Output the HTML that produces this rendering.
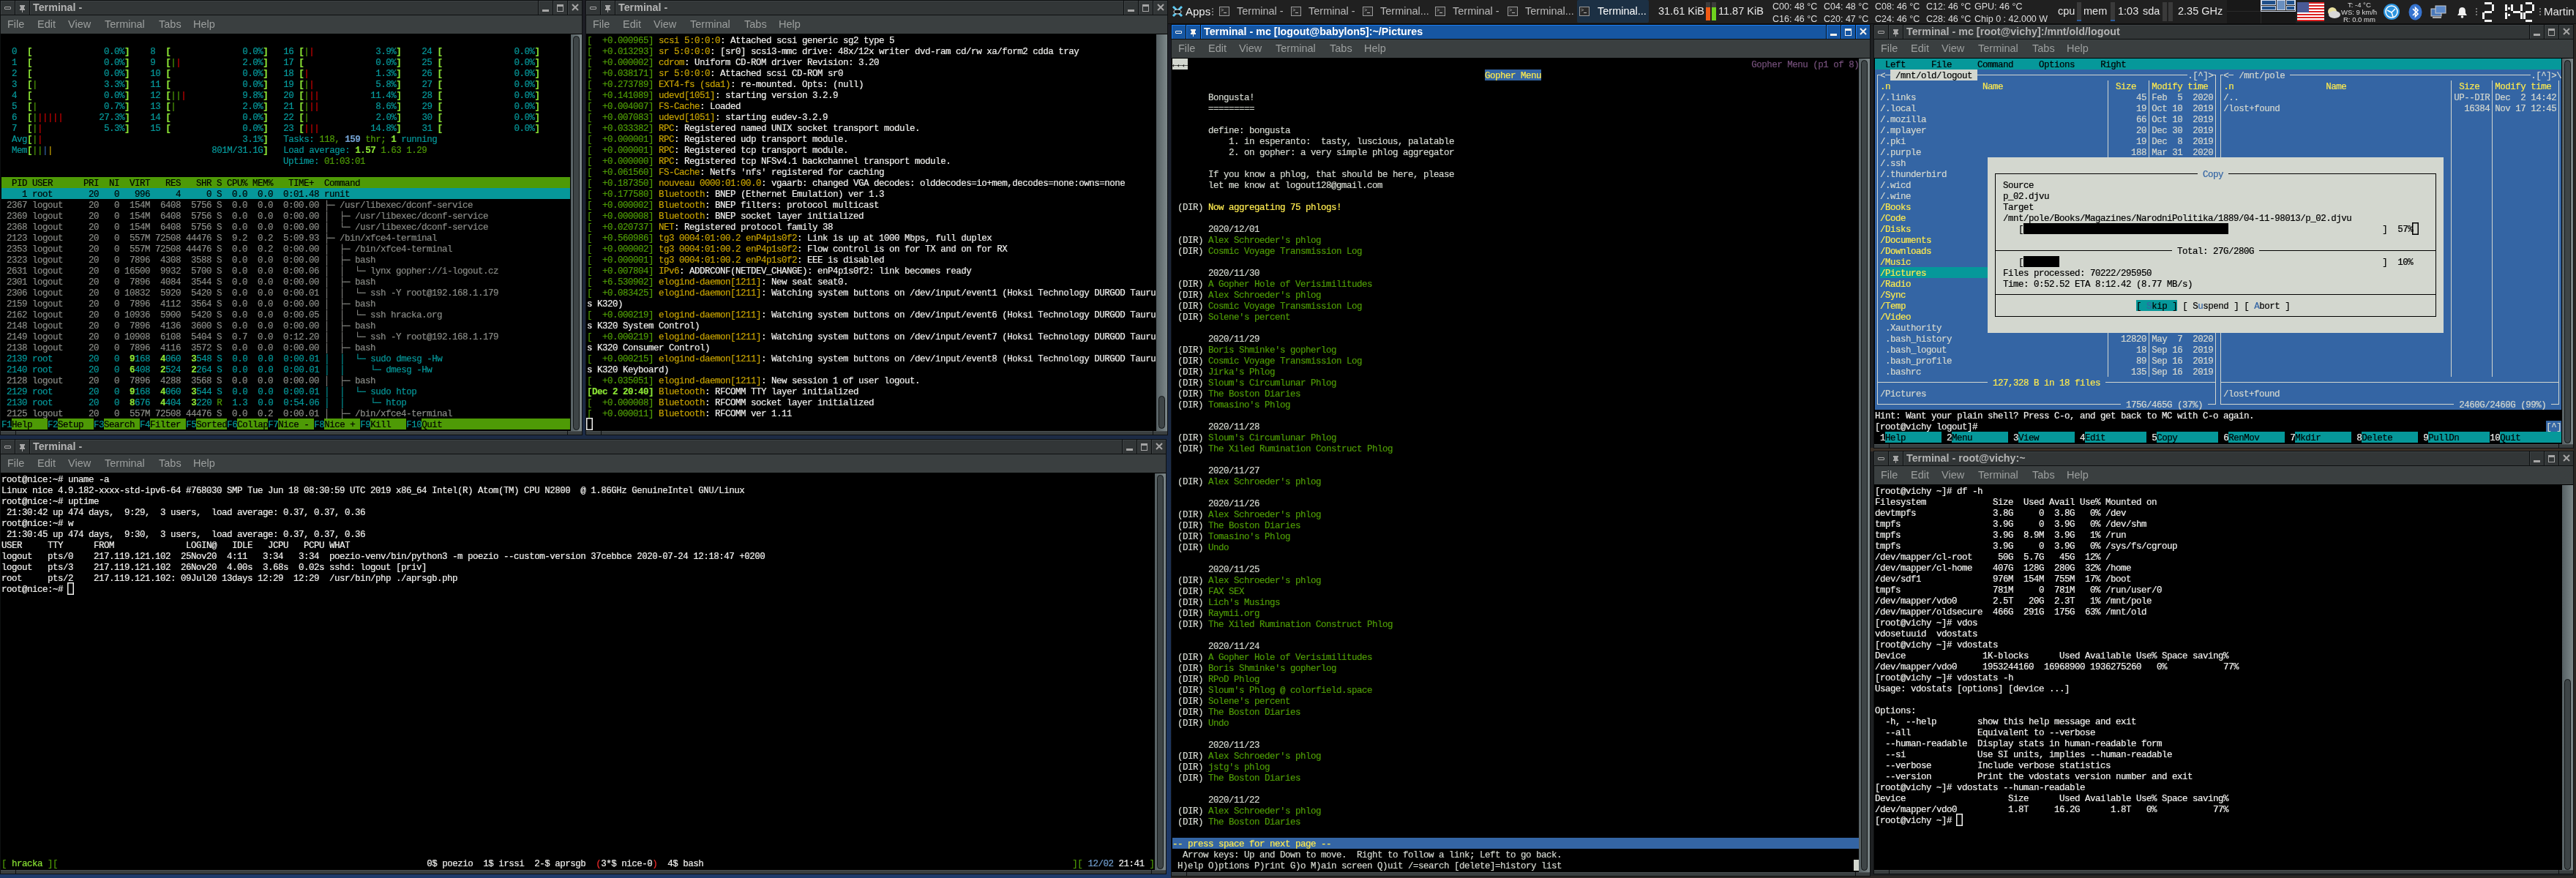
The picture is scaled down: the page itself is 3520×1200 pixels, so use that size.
<!DOCTYPE html>
<html><head><meta charset="utf-8"><style>
html,body{margin:0;padding:0;width:3520px;height:1200px;overflow:hidden;background:linear-gradient(180deg,#1c1c22 0px,#1c2b45 597px,#1e3a6a 1197px);position:relative}
.t{position:absolute;white-space:pre;-webkit-text-stroke:0.2px currentColor;font-family:"Liberation Mono",monospace;font-size:12.5px;line-height:15px;letter-spacing:-0.5px;padding-top:2px;height:15px}
.tt{position:absolute;white-space:pre;font-family:"Liberation Sans",sans-serif;font-size:14.3px;font-weight:bold;line-height:17px;padding-top:1px}
.mn{position:absolute;white-space:pre;font-family:"Liberation Sans",sans-serif;font-size:14.5px;line-height:25px;color:#9c9f9e}
.ps{position:absolute;white-space:pre;font-family:"Liberation Sans",sans-serif;color:#e6e6e6}
</style></head>
<body><div id="root" style="position:absolute;left:0;top:0;width:3520px;height:1200px;will-change:transform;overflow:hidden">
<div style="position:absolute;left:1600px;top:0px;width:1920px;height:1200px;background:#1e2022;"></div>
<div style="position:absolute;left:2556px;top:612px;width:964px;height:5px;background:#3b3128;"></div>
<div style="position:absolute;left:1600px;top:1197px;width:1920px;height:3px;background:#2c2825;"></div>
<div style="position:absolute;left:3516px;top:33px;width:4px;height:1167px;background:#2a2623;"></div>
<div style="position:absolute;left:0px;top:0px;width:796px;height:595px;background:#0e1011;"></div>
<div style="position:absolute;left:1px;top:1px;width:19px;height:19px;background:#323637;box-shadow: inset 1px 1px 0 #3d4244"></div><div style="position:absolute;left:6px;top:9px;width:7px;height:2px;border:1px solid #a6a6a6;border-radius:1px"></div>
<div style="position:absolute;left:21px;top:1px;width:19px;height:19px;background:#323637;box-shadow: inset 1px 1px 0 #3d4244"></div><div style="position:absolute;left:27px;top:7px;width:7px;height:2px;background:#a6a6a6"></div><div style="position:absolute;left:28px;top:9px;width:5px;height:3px;background:#a6a6a6"></div><div style="position:absolute;left:27px;top:12px;width:7px;height:2px;background:#a6a6a6"></div><div style="position:absolute;left:30px;top:14px;width:1px;height:3px;background:#a6a6a6"></div>
<div style="position:absolute;left:41px;top:1px;width:694px;height:19px;background:#323637;box-shadow: inset 1px 1px 0 #3d4244"></div>
<div class="tt" style="left:45px;top:1px;color:#b4b4b4">Terminal -</div>
<div style="position:absolute;left:736px;top:1px;width:19px;height:19px;background:#323637;box-shadow: inset 1px 1px 0 #3d4244"></div><div style="position:absolute;left:741px;top:13px;width:9px;height:3px;background:#a6a6a6"></div>
<div style="position:absolute;left:756px;top:1px;width:19px;height:19px;background:#323637;box-shadow: inset 1px 1px 0 #3d4244"></div><div style="position:absolute;left:761px;top:6px;width:7px;height:6px;border:1px solid #a6a6a6;border-top-width:3px"></div>
<div style="position:absolute;left:776px;top:1px;width:19px;height:19px;background:#323637;box-shadow: inset 1px 1px 0 #3d4244"></div><svg style="position:absolute;left:781px;top:5px" width="10" height="10"><path d="M1 1L9 9M9 1L1 9" stroke="#a6a6a6" stroke-width="2"/></svg>
<div style="position:absolute;left:1px;top:21px;width:794px;height:25px;background:#3a3f40;"></div>
<div class="mn" style="left:10px;top:21px">File</div>
<div class="mn" style="left:51px;top:21px">Edit</div>
<div class="mn" style="left:93px;top:21px">View</div>
<div class="mn" style="left:143px;top:21px">Terminal</div>
<div class="mn" style="left:217px;top:21px">Tabs</div>
<div class="mn" style="left:264px;top:21px">Help</div>
<div style="position:absolute;left:1px;top:46px;width:794px;height:543px;background:#000;"></div>
<div style="position:absolute;left:780px;top:47px;width:15px;height:542px;background:linear-gradient(90deg,#566063,#7d888a);"></div>
<div style="position:absolute;left:783px;top:49px;width:7px;height:537px;background:#3e4547;border:1px solid #151819;border-radius:5px"></div>
<div style="position:absolute;left:1px;top:589px;width:20px;height:5px;background:#3a3f40;box-shadow: inset 0 1px 0 #4a5052"></div>
<div style="position:absolute;left:22px;top:589px;width:753px;height:5px;background:#3a3f40;box-shadow: inset 0 1px 0 #4a5052"></div>
<div style="position:absolute;left:776px;top:589px;width:19px;height:5px;background:#3a3f40;box-shadow: inset 0 1px 0 #4a5052"></div>
<div style="position:absolute;left:800px;top:0px;width:796px;height:595px;background:#0e1011;"></div>
<div style="position:absolute;left:801px;top:1px;width:19px;height:19px;background:#323637;box-shadow: inset 1px 1px 0 #3d4244"></div><div style="position:absolute;left:806px;top:9px;width:7px;height:2px;border:1px solid #a6a6a6;border-radius:1px"></div>
<div style="position:absolute;left:821px;top:1px;width:19px;height:19px;background:#323637;box-shadow: inset 1px 1px 0 #3d4244"></div><div style="position:absolute;left:827px;top:7px;width:7px;height:2px;background:#a6a6a6"></div><div style="position:absolute;left:828px;top:9px;width:5px;height:3px;background:#a6a6a6"></div><div style="position:absolute;left:827px;top:12px;width:7px;height:2px;background:#a6a6a6"></div><div style="position:absolute;left:830px;top:14px;width:1px;height:3px;background:#a6a6a6"></div>
<div style="position:absolute;left:841px;top:1px;width:694px;height:19px;background:#323637;box-shadow: inset 1px 1px 0 #3d4244"></div>
<div class="tt" style="left:845px;top:1px;color:#b4b4b4">Terminal -</div>
<div style="position:absolute;left:1536px;top:1px;width:19px;height:19px;background:#323637;box-shadow: inset 1px 1px 0 #3d4244"></div><div style="position:absolute;left:1541px;top:13px;width:9px;height:3px;background:#a6a6a6"></div>
<div style="position:absolute;left:1556px;top:1px;width:19px;height:19px;background:#323637;box-shadow: inset 1px 1px 0 #3d4244"></div><div style="position:absolute;left:1561px;top:6px;width:7px;height:6px;border:1px solid #a6a6a6;border-top-width:3px"></div>
<div style="position:absolute;left:1576px;top:1px;width:19px;height:19px;background:#323637;box-shadow: inset 1px 1px 0 #3d4244"></div><svg style="position:absolute;left:1581px;top:5px" width="10" height="10"><path d="M1 1L9 9M9 1L1 9" stroke="#a6a6a6" stroke-width="2"/></svg>
<div style="position:absolute;left:801px;top:21px;width:794px;height:25px;background:#3a3f40;"></div>
<div class="mn" style="left:810px;top:21px">File</div>
<div class="mn" style="left:851px;top:21px">Edit</div>
<div class="mn" style="left:893px;top:21px">View</div>
<div class="mn" style="left:943px;top:21px">Terminal</div>
<div class="mn" style="left:1017px;top:21px">Tabs</div>
<div class="mn" style="left:1064px;top:21px">Help</div>
<div style="position:absolute;left:801px;top:46px;width:794px;height:543px;background:#000;"></div>
<div style="position:absolute;left:1580px;top:47px;width:15px;height:542px;background:linear-gradient(90deg,#566063,#7d888a);"></div>
<div style="position:absolute;left:1583px;top:541px;width:7px;height:43px;background:#3e4547;border:1px solid #151819;border-radius:5px"></div>
<div style="position:absolute;left:801px;top:589px;width:20px;height:5px;background:#3a3f40;box-shadow: inset 0 1px 0 #4a5052"></div>
<div style="position:absolute;left:822px;top:589px;width:753px;height:5px;background:#3a3f40;box-shadow: inset 0 1px 0 #4a5052"></div>
<div style="position:absolute;left:1576px;top:589px;width:19px;height:5px;background:#3a3f40;box-shadow: inset 0 1px 0 #4a5052"></div>
<div style="position:absolute;left:0px;top:600px;width:1594px;height:595px;background:#0e1011;"></div>
<div style="position:absolute;left:1px;top:601px;width:19px;height:19px;background:#323637;box-shadow: inset 1px 1px 0 #3d4244"></div><div style="position:absolute;left:6px;top:609px;width:7px;height:2px;border:1px solid #a6a6a6;border-radius:1px"></div>
<div style="position:absolute;left:21px;top:601px;width:19px;height:19px;background:#323637;box-shadow: inset 1px 1px 0 #3d4244"></div><div style="position:absolute;left:27px;top:607px;width:7px;height:2px;background:#a6a6a6"></div><div style="position:absolute;left:28px;top:609px;width:5px;height:3px;background:#a6a6a6"></div><div style="position:absolute;left:27px;top:612px;width:7px;height:2px;background:#a6a6a6"></div><div style="position:absolute;left:30px;top:614px;width:1px;height:3px;background:#a6a6a6"></div>
<div style="position:absolute;left:41px;top:601px;width:1492px;height:19px;background:#323637;box-shadow: inset 1px 1px 0 #3d4244"></div>
<div class="tt" style="left:45px;top:601px;color:#b4b4b4">Terminal -</div>
<div style="position:absolute;left:1534px;top:601px;width:19px;height:19px;background:#323637;box-shadow: inset 1px 1px 0 #3d4244"></div><div style="position:absolute;left:1539px;top:613px;width:9px;height:3px;background:#a6a6a6"></div>
<div style="position:absolute;left:1554px;top:601px;width:19px;height:19px;background:#323637;box-shadow: inset 1px 1px 0 #3d4244"></div><div style="position:absolute;left:1559px;top:606px;width:7px;height:6px;border:1px solid #a6a6a6;border-top-width:3px"></div>
<div style="position:absolute;left:1574px;top:601px;width:19px;height:19px;background:#323637;box-shadow: inset 1px 1px 0 #3d4244"></div><svg style="position:absolute;left:1579px;top:605px" width="10" height="10"><path d="M1 1L9 9M9 1L1 9" stroke="#a6a6a6" stroke-width="2"/></svg>
<div style="position:absolute;left:1px;top:621px;width:1592px;height:25px;background:#3a3f40;"></div>
<div class="mn" style="left:10px;top:621px">File</div>
<div class="mn" style="left:51px;top:621px">Edit</div>
<div class="mn" style="left:93px;top:621px">View</div>
<div class="mn" style="left:143px;top:621px">Terminal</div>
<div class="mn" style="left:217px;top:621px">Tabs</div>
<div class="mn" style="left:264px;top:621px">Help</div>
<div style="position:absolute;left:1px;top:646px;width:1592px;height:543px;background:#000;"></div>
<div style="position:absolute;left:1578px;top:647px;width:15px;height:542px;background:linear-gradient(90deg,#566063,#7d888a);"></div>
<div style="position:absolute;left:1581px;top:649px;width:7px;height:537px;background:#3e4547;border:1px solid #151819;border-radius:5px"></div>
<div style="position:absolute;left:1px;top:1189px;width:20px;height:5px;background:#3a3f40;box-shadow: inset 0 1px 0 #4a5052"></div>
<div style="position:absolute;left:22px;top:1189px;width:1551px;height:5px;background:#3a3f40;box-shadow: inset 0 1px 0 #4a5052"></div>
<div style="position:absolute;left:1574px;top:1189px;width:19px;height:5px;background:#3a3f40;box-shadow: inset 0 1px 0 #4a5052"></div>
<div style="position:absolute;left:1600px;top:33px;width:956px;height:1165px;background:#0e1011;"></div>
<div style="position:absolute;left:1601px;top:34px;width:19px;height:19px;background:#1656a2;box-shadow: inset 1px 1px 0 #1b7df2"></div><div style="position:absolute;left:1606px;top:42px;width:7px;height:2px;border:1px solid #f5f2ee;border-radius:1px"></div>
<div style="position:absolute;left:1621px;top:34px;width:19px;height:19px;background:#1656a2;box-shadow: inset 1px 1px 0 #1b7df2"></div><div style="position:absolute;left:1627px;top:40px;width:7px;height:2px;background:#f5f2ee"></div><div style="position:absolute;left:1628px;top:42px;width:5px;height:3px;background:#f5f2ee"></div><div style="position:absolute;left:1627px;top:45px;width:7px;height:2px;background:#f5f2ee"></div><div style="position:absolute;left:1630px;top:47px;width:1px;height:3px;background:#f5f2ee"></div>
<div style="position:absolute;left:1641px;top:34px;width:854px;height:19px;background:#1656a2;box-shadow: inset 1px 1px 0 #1b7df2"></div>
<div class="tt" style="left:1645px;top:34px;color:#ffffff">Terminal - mc [logout@babylon5]:~/Pictures</div>
<div style="position:absolute;left:2496px;top:34px;width:19px;height:19px;background:#1656a2;box-shadow: inset 1px 1px 0 #1b7df2"></div><div style="position:absolute;left:2501px;top:46px;width:9px;height:3px;background:#f5f2ee"></div>
<div style="position:absolute;left:2516px;top:34px;width:19px;height:19px;background:#1656a2;box-shadow: inset 1px 1px 0 #1b7df2"></div><div style="position:absolute;left:2521px;top:39px;width:7px;height:6px;border:1px solid #f5f2ee;border-top-width:3px"></div>
<div style="position:absolute;left:2536px;top:34px;width:19px;height:19px;background:#1656a2;box-shadow: inset 1px 1px 0 #1b7df2"></div><svg style="position:absolute;left:2541px;top:38px" width="10" height="10"><path d="M1 1L9 9M9 1L1 9" stroke="#f5f2ee" stroke-width="2"/></svg>
<div style="position:absolute;left:1601px;top:54px;width:954px;height:25px;background:#3a3f40;"></div>
<div class="mn" style="left:1610px;top:54px">File</div>
<div class="mn" style="left:1651px;top:54px">Edit</div>
<div class="mn" style="left:1693px;top:54px">View</div>
<div class="mn" style="left:1743px;top:54px">Terminal</div>
<div class="mn" style="left:1817px;top:54px">Tabs</div>
<div class="mn" style="left:1864px;top:54px">Help</div>
<div style="position:absolute;left:1601px;top:79px;width:954px;height:1113px;background:#000;"></div>
<div style="position:absolute;left:2540px;top:80px;width:15px;height:1112px;background:linear-gradient(90deg,#566063,#7d888a);"></div>
<div style="position:absolute;left:2543px;top:82px;width:7px;height:1106px;background:#3e4547;border:1px solid #151819;border-radius:5px"></div>
<div style="position:absolute;left:1601px;top:1192px;width:20px;height:5px;background:#3a3f40;box-shadow: inset 0 1px 0 #4a5052"></div>
<div style="position:absolute;left:1622px;top:1192px;width:913px;height:5px;background:#3a3f40;box-shadow: inset 0 1px 0 #4a5052"></div>
<div style="position:absolute;left:2536px;top:1192px;width:19px;height:5px;background:#3a3f40;box-shadow: inset 0 1px 0 #4a5052"></div>
<div style="position:absolute;left:2560px;top:33px;width:957px;height:580px;background:#0e1011;"></div>
<div style="position:absolute;left:2561px;top:34px;width:19px;height:19px;background:#323637;box-shadow: inset 1px 1px 0 #3d4244"></div><div style="position:absolute;left:2566px;top:42px;width:7px;height:2px;border:1px solid #a6a6a6;border-radius:1px"></div>
<div style="position:absolute;left:2581px;top:34px;width:19px;height:19px;background:#323637;box-shadow: inset 1px 1px 0 #3d4244"></div><div style="position:absolute;left:2587px;top:40px;width:7px;height:2px;background:#a6a6a6"></div><div style="position:absolute;left:2588px;top:42px;width:5px;height:3px;background:#a6a6a6"></div><div style="position:absolute;left:2587px;top:45px;width:7px;height:2px;background:#a6a6a6"></div><div style="position:absolute;left:2590px;top:47px;width:1px;height:3px;background:#a6a6a6"></div>
<div style="position:absolute;left:2601px;top:34px;width:855px;height:19px;background:#323637;box-shadow: inset 1px 1px 0 #3d4244"></div>
<div class="tt" style="left:2605px;top:34px;color:#b4b4b4">Terminal - mc [root@vichy]:/mnt/old/logout</div>
<div style="position:absolute;left:3457px;top:34px;width:19px;height:19px;background:#323637;box-shadow: inset 1px 1px 0 #3d4244"></div><div style="position:absolute;left:3462px;top:46px;width:9px;height:3px;background:#a6a6a6"></div>
<div style="position:absolute;left:3477px;top:34px;width:19px;height:19px;background:#323637;box-shadow: inset 1px 1px 0 #3d4244"></div><div style="position:absolute;left:3482px;top:39px;width:7px;height:6px;border:1px solid #a6a6a6;border-top-width:3px"></div>
<div style="position:absolute;left:3497px;top:34px;width:19px;height:19px;background:#323637;box-shadow: inset 1px 1px 0 #3d4244"></div><svg style="position:absolute;left:3502px;top:38px" width="10" height="10"><path d="M1 1L9 9M9 1L1 9" stroke="#a6a6a6" stroke-width="2"/></svg>
<div style="position:absolute;left:2561px;top:54px;width:955px;height:25px;background:#3a3f40;"></div>
<div class="mn" style="left:2570px;top:54px">File</div>
<div class="mn" style="left:2611px;top:54px">Edit</div>
<div class="mn" style="left:2653px;top:54px">View</div>
<div class="mn" style="left:2703px;top:54px">Terminal</div>
<div class="mn" style="left:2777px;top:54px">Tabs</div>
<div class="mn" style="left:2824px;top:54px">Help</div>
<div style="position:absolute;left:2561px;top:79px;width:955px;height:528px;background:#000;"></div>
<div style="position:absolute;left:3501px;top:80px;width:15px;height:527px;background:linear-gradient(90deg,#566063,#7d888a);"></div>
<div style="position:absolute;left:3504px;top:82px;width:7px;height:522px;background:#3e4547;border:1px solid #151819;border-radius:5px"></div>
<div style="position:absolute;left:2561px;top:607px;width:20px;height:5px;background:#3a3f40;box-shadow: inset 0 1px 0 #4a5052"></div>
<div style="position:absolute;left:2582px;top:607px;width:914px;height:5px;background:#3a3f40;box-shadow: inset 0 1px 0 #4a5052"></div>
<div style="position:absolute;left:3497px;top:607px;width:19px;height:5px;background:#3a3f40;box-shadow: inset 0 1px 0 #4a5052"></div>
<div style="position:absolute;left:2560px;top:616px;width:957px;height:579px;background:#0e1011;"></div>
<div style="position:absolute;left:2561px;top:617px;width:19px;height:19px;background:#323637;box-shadow: inset 1px 1px 0 #3d4244"></div><div style="position:absolute;left:2566px;top:625px;width:7px;height:2px;border:1px solid #a6a6a6;border-radius:1px"></div>
<div style="position:absolute;left:2581px;top:617px;width:19px;height:19px;background:#323637;box-shadow: inset 1px 1px 0 #3d4244"></div><div style="position:absolute;left:2587px;top:623px;width:7px;height:2px;background:#a6a6a6"></div><div style="position:absolute;left:2588px;top:625px;width:5px;height:3px;background:#a6a6a6"></div><div style="position:absolute;left:2587px;top:628px;width:7px;height:2px;background:#a6a6a6"></div><div style="position:absolute;left:2590px;top:630px;width:1px;height:3px;background:#a6a6a6"></div>
<div style="position:absolute;left:2601px;top:617px;width:855px;height:19px;background:#323637;box-shadow: inset 1px 1px 0 #3d4244"></div>
<div class="tt" style="left:2605px;top:617px;color:#b4b4b4">Terminal - root@vichy:~</div>
<div style="position:absolute;left:3457px;top:617px;width:19px;height:19px;background:#323637;box-shadow: inset 1px 1px 0 #3d4244"></div><div style="position:absolute;left:3462px;top:629px;width:9px;height:3px;background:#a6a6a6"></div>
<div style="position:absolute;left:3477px;top:617px;width:19px;height:19px;background:#323637;box-shadow: inset 1px 1px 0 #3d4244"></div><div style="position:absolute;left:3482px;top:622px;width:7px;height:6px;border:1px solid #a6a6a6;border-top-width:3px"></div>
<div style="position:absolute;left:3497px;top:617px;width:19px;height:19px;background:#323637;box-shadow: inset 1px 1px 0 #3d4244"></div><svg style="position:absolute;left:3502px;top:621px" width="10" height="10"><path d="M1 1L9 9M9 1L1 9" stroke="#a6a6a6" stroke-width="2"/></svg>
<div style="position:absolute;left:2561px;top:637px;width:955px;height:25px;background:#3a3f40;"></div>
<div class="mn" style="left:2570px;top:637px">File</div>
<div class="mn" style="left:2611px;top:637px">Edit</div>
<div class="mn" style="left:2653px;top:637px">View</div>
<div class="mn" style="left:2703px;top:637px">Terminal</div>
<div class="mn" style="left:2777px;top:637px">Tabs</div>
<div class="mn" style="left:2824px;top:637px">Help</div>
<div style="position:absolute;left:2561px;top:662px;width:955px;height:527px;background:#000;"></div>
<div style="position:absolute;left:3501px;top:663px;width:15px;height:526px;background:linear-gradient(90deg,#566063,#7d888a);"></div>
<div style="position:absolute;left:3504px;top:928px;width:7px;height:259px;background:#3e4547;border:1px solid #151819;border-radius:5px"></div>
<div style="position:absolute;left:2561px;top:1189px;width:20px;height:5px;background:#3a3f40;box-shadow: inset 0 1px 0 #4a5052"></div>
<div style="position:absolute;left:2582px;top:1189px;width:914px;height:5px;background:#3a3f40;box-shadow: inset 0 1px 0 #4a5052"></div>
<div style="position:absolute;left:3497px;top:1189px;width:19px;height:5px;background:#3a3f40;box-shadow: inset 0 1px 0 #4a5052"></div>
<div style="position:absolute;left:2px;top:242px;width:777px;height:15px;background:#4e9a06;"></div>
<div style="position:absolute;left:2px;top:257px;width:777px;height:15px;background:#06989a;"></div>
<div style="position:absolute;left:16px;top:572px;width:49px;height:15px;background:#4e9a06;"></div>
<div style="position:absolute;left:79px;top:572px;width:49px;height:15px;background:#4e9a06;"></div>
<div style="position:absolute;left:142px;top:572px;width:49px;height:15px;background:#4e9a06;"></div>
<div style="position:absolute;left:205px;top:572px;width:49px;height:15px;background:#4e9a06;"></div>
<div style="position:absolute;left:268px;top:572px;width:42px;height:15px;background:#4e9a06;"></div>
<div style="position:absolute;left:324px;top:572px;width:42px;height:15px;background:#4e9a06;"></div>
<div style="position:absolute;left:380px;top:572px;width:49px;height:15px;background:#4e9a06;"></div>
<div style="position:absolute;left:443px;top:572px;width:49px;height:15px;background:#4e9a06;"></div>
<div style="position:absolute;left:506px;top:572px;width:49px;height:15px;background:#4e9a06;"></div>
<div style="position:absolute;left:576px;top:572px;width:203px;height:15px;background:#4e9a06;"></div>
<div class="t" style="left:2px;top:62px"><span style="color:#d3d7cf">  </span><span style="color:#06989a">0  </span><span style="color:#8ae234;font-weight:bold">[</span><span style="color:#d3d7cf">              </span><span style="color:#06989a">0.0%</span><span style="color:#8ae234;font-weight:bold">]</span><span style="color:#d3d7cf">    </span><span style="color:#06989a">8  </span><span style="color:#8ae234;font-weight:bold">[</span><span style="color:#d3d7cf">              </span><span style="color:#06989a">0.0%</span><span style="color:#8ae234;font-weight:bold">]</span><span style="color:#d3d7cf">   </span><span style="color:#06989a">16 </span><span style="color:#8ae234;font-weight:bold">[</span><span style="color:#4e9a06">|</span><span style="color:#cc0000">|</span><span style="color:#d3d7cf">            </span><span style="color:#06989a">3.9%</span><span style="color:#8ae234;font-weight:bold">]</span><span style="color:#d3d7cf">    </span><span style="color:#06989a">24 </span><span style="color:#8ae234;font-weight:bold">[</span><span style="color:#d3d7cf">              </span><span style="color:#06989a">0.0%</span><span style="color:#8ae234;font-weight:bold">]</span></div>
<div class="t" style="left:2px;top:77px"><span style="color:#d3d7cf">  </span><span style="color:#06989a">1  </span><span style="color:#8ae234;font-weight:bold">[</span><span style="color:#d3d7cf">              </span><span style="color:#06989a">0.0%</span><span style="color:#8ae234;font-weight:bold">]</span><span style="color:#d3d7cf">    </span><span style="color:#06989a">9  </span><span style="color:#8ae234;font-weight:bold">[</span><span style="color:#4e9a06">|</span><span style="color:#cc0000">|</span><span style="color:#d3d7cf">            </span><span style="color:#06989a">2.0%</span><span style="color:#8ae234;font-weight:bold">]</span><span style="color:#d3d7cf">   </span><span style="color:#06989a">17 </span><span style="color:#8ae234;font-weight:bold">[</span><span style="color:#d3d7cf">              </span><span style="color:#06989a">0.0%</span><span style="color:#8ae234;font-weight:bold">]</span><span style="color:#d3d7cf">    </span><span style="color:#06989a">25 </span><span style="color:#8ae234;font-weight:bold">[</span><span style="color:#d3d7cf">              </span><span style="color:#06989a">0.0%</span><span style="color:#8ae234;font-weight:bold">]</span></div>
<div class="t" style="left:2px;top:92px"><span style="color:#d3d7cf">  </span><span style="color:#06989a">2  </span><span style="color:#8ae234;font-weight:bold">[</span><span style="color:#d3d7cf">              </span><span style="color:#06989a">0.0%</span><span style="color:#8ae234;font-weight:bold">]</span><span style="color:#d3d7cf">    </span><span style="color:#06989a">10 </span><span style="color:#8ae234;font-weight:bold">[</span><span style="color:#d3d7cf">              </span><span style="color:#06989a">0.0%</span><span style="color:#8ae234;font-weight:bold">]</span><span style="color:#d3d7cf">   </span><span style="color:#06989a">18 </span><span style="color:#8ae234;font-weight:bold">[</span><span style="color:#cc0000">|</span><span style="color:#d3d7cf">             </span><span style="color:#06989a">1.3%</span><span style="color:#8ae234;font-weight:bold">]</span><span style="color:#d3d7cf">    </span><span style="color:#06989a">26 </span><span style="color:#8ae234;font-weight:bold">[</span><span style="color:#d3d7cf">              </span><span style="color:#06989a">0.0%</span><span style="color:#8ae234;font-weight:bold">]</span></div>
<div class="t" style="left:2px;top:107px"><span style="color:#d3d7cf">  </span><span style="color:#06989a">3  </span><span style="color:#8ae234;font-weight:bold">[</span><span style="color:#4e9a06">|</span><span style="color:#d3d7cf">             </span><span style="color:#06989a">3.3%</span><span style="color:#8ae234;font-weight:bold">]</span><span style="color:#d3d7cf">    </span><span style="color:#06989a">11 </span><span style="color:#8ae234;font-weight:bold">[</span><span style="color:#d3d7cf">              </span><span style="color:#06989a">0.0%</span><span style="color:#8ae234;font-weight:bold">]</span><span style="color:#d3d7cf">   </span><span style="color:#06989a">19 </span><span style="color:#8ae234;font-weight:bold">[</span><span style="color:#4e9a06">|</span><span style="color:#cc0000">|</span><span style="color:#d3d7cf">            </span><span style="color:#06989a">5.8%</span><span style="color:#8ae234;font-weight:bold">]</span><span style="color:#d3d7cf">    </span><span style="color:#06989a">27 </span><span style="color:#8ae234;font-weight:bold">[</span><span style="color:#d3d7cf">              </span><span style="color:#06989a">0.0%</span><span style="color:#8ae234;font-weight:bold">]</span></div>
<div class="t" style="left:2px;top:122px"><span style="color:#d3d7cf">  </span><span style="color:#06989a">4  </span><span style="color:#8ae234;font-weight:bold">[</span><span style="color:#d3d7cf">              </span><span style="color:#06989a">0.0%</span><span style="color:#8ae234;font-weight:bold">]</span><span style="color:#d3d7cf">    </span><span style="color:#06989a">12 </span><span style="color:#8ae234;font-weight:bold">[</span><span style="color:#4e9a06">|</span><span style="color:#4e9a06">|</span><span style="color:#cc0000">|</span><span style="color:#d3d7cf">           </span><span style="color:#06989a">9.8%</span><span style="color:#8ae234;font-weight:bold">]</span><span style="color:#d3d7cf">   </span><span style="color:#06989a">20 </span><span style="color:#8ae234;font-weight:bold">[</span><span style="color:#4e9a06">|</span><span style="color:#cc0000">|</span><span style="color:#cc0000">|</span><span style="color:#d3d7cf">          </span><span style="color:#06989a">11.4%</span><span style="color:#8ae234;font-weight:bold">]</span><span style="color:#d3d7cf">    </span><span style="color:#06989a">28 </span><span style="color:#8ae234;font-weight:bold">[</span><span style="color:#d3d7cf">              </span><span style="color:#06989a">0.0%</span><span style="color:#8ae234;font-weight:bold">]</span></div>
<div class="t" style="left:2px;top:137px"><span style="color:#d3d7cf">  </span><span style="color:#06989a">5  </span><span style="color:#8ae234;font-weight:bold">[</span><span style="color:#4e9a06">|</span><span style="color:#d3d7cf">             </span><span style="color:#06989a">0.7%</span><span style="color:#8ae234;font-weight:bold">]</span><span style="color:#d3d7cf">    </span><span style="color:#06989a">13 </span><span style="color:#8ae234;font-weight:bold">[</span><span style="color:#4e9a06">|</span><span style="color:#d3d7cf">             </span><span style="color:#06989a">2.0%</span><span style="color:#8ae234;font-weight:bold">]</span><span style="color:#d3d7cf">   </span><span style="color:#06989a">21 </span><span style="color:#8ae234;font-weight:bold">[</span><span style="color:#4e9a06">|</span><span style="color:#cc0000">|</span><span style="color:#cc0000">|</span><span style="color:#d3d7cf">           </span><span style="color:#06989a">8.6%</span><span style="color:#8ae234;font-weight:bold">]</span><span style="color:#d3d7cf">    </span><span style="color:#06989a">29 </span><span style="color:#8ae234;font-weight:bold">[</span><span style="color:#d3d7cf">              </span><span style="color:#06989a">0.0%</span><span style="color:#8ae234;font-weight:bold">]</span></div>
<div class="t" style="left:2px;top:152px"><span style="color:#d3d7cf">  </span><span style="color:#06989a">6  </span><span style="color:#8ae234;font-weight:bold">[</span><span style="color:#4e9a06">|</span><span style="color:#cc0000">|</span><span style="color:#cc0000">|</span><span style="color:#cc0000">|</span><span style="color:#cc0000">|</span><span style="color:#cc0000">|</span><span style="color:#d3d7cf">       </span><span style="color:#06989a">27.3%</span><span style="color:#8ae234;font-weight:bold">]</span><span style="color:#d3d7cf">    </span><span style="color:#06989a">14 </span><span style="color:#8ae234;font-weight:bold">[</span><span style="color:#d3d7cf">              </span><span style="color:#06989a">0.0%</span><span style="color:#8ae234;font-weight:bold">]</span><span style="color:#d3d7cf">   </span><span style="color:#06989a">22 </span><span style="color:#8ae234;font-weight:bold">[</span><span style="color:#4e9a06">|</span><span style="color:#d3d7cf">             </span><span style="color:#06989a">2.0%</span><span style="color:#8ae234;font-weight:bold">]</span><span style="color:#d3d7cf">    </span><span style="color:#06989a">30 </span><span style="color:#8ae234;font-weight:bold">[</span><span style="color:#d3d7cf">              </span><span style="color:#06989a">0.0%</span><span style="color:#8ae234;font-weight:bold">]</span></div>
<div class="t" style="left:2px;top:167px"><span style="color:#d3d7cf">  </span><span style="color:#06989a">7  </span><span style="color:#8ae234;font-weight:bold">[</span><span style="color:#4e9a06">|</span><span style="color:#cc0000">|</span><span style="color:#d3d7cf">            </span><span style="color:#06989a">5.3%</span><span style="color:#8ae234;font-weight:bold">]</span><span style="color:#d3d7cf">    </span><span style="color:#06989a">15 </span><span style="color:#8ae234;font-weight:bold">[</span><span style="color:#d3d7cf">              </span><span style="color:#06989a">0.0%</span><span style="color:#8ae234;font-weight:bold">]</span><span style="color:#d3d7cf">   </span><span style="color:#06989a">23 </span><span style="color:#8ae234;font-weight:bold">[</span><span style="color:#cc0000">|</span><span style="color:#cc0000">|</span><span style="color:#cc0000">|</span><span style="color:#d3d7cf">          </span><span style="color:#06989a">14.8%</span><span style="color:#8ae234;font-weight:bold">]</span><span style="color:#d3d7cf">    </span><span style="color:#06989a">31 </span><span style="color:#8ae234;font-weight:bold">[</span><span style="color:#d3d7cf">              </span><span style="color:#06989a">0.0%</span><span style="color:#8ae234;font-weight:bold">]</span></div>
<div class="t" style="left:2px;top:182px"><span style="color:#d3d7cf">  </span><span style="color:#06989a">Avg</span><span style="color:#8ae234;font-weight:bold">[</span><span style="color:#4e9a06">|</span><span style="color:#cc0000">|</span><span style="color:#d3d7cf">                                       </span><span style="color:#06989a">3.1%</span><span style="color:#8ae234;font-weight:bold">]</span><span style="color:#d3d7cf">   </span><span style="color:#06989a">Tasks: </span><span style="color:#4e9a06">118</span><span style="color:#4e9a06">, </span><span style="color:#729fcf;font-weight:bold">159</span><span style="color:#4e9a06"> thr</span><span style="color:#4e9a06">; </span><span style="color:#8ae234;font-weight:bold">1</span><span style="color:#06989a"> running</span></div>
<div class="t" style="left:2px;top:197px"><span style="color:#d3d7cf">  </span><span style="color:#06989a">Mem</span><span style="color:#8ae234;font-weight:bold">[</span><span style="color:#4e9a06">|</span><span style="color:#4e9a06">|</span><span style="color:#3465a4">|</span><span style="color:#c4a000">|</span><span style="color:#d3d7cf">                               </span><span style="color:#06989a">801M/31.1G</span><span style="color:#8ae234;font-weight:bold">]</span><span style="color:#d3d7cf">   </span><span style="color:#06989a">Load average: </span><span style="color:#8ae234;font-weight:bold">1.57 </span><span style="color:#4e9a06">1.63 </span><span style="color:#4e9a06">1.29</span></div>
<div class="t" style="left:2px;top:212px"><span style="color:#d3d7cf">                                                       </span><span style="color:#06989a">Uptime: </span><span style="color:#4e9a06">01:03:01</span></div>
<div class="t" style="left:2px;top:242px"><span style="color:#000000">  PID USER      PRI  NI  VIRT   RES   SHR S CPU% MEM%   TIME+  Command</span></div>
<div class="t" style="left:2px;top:257px"><span style="color:#000000">    1 root       20   0   996     4     0 S  0.0  0.0  0:01.48 runit</span></div>
<div class="t" style="left:2px;top:272px"><span style="color:#888a85"> 2367 logout     20   0  154M  6408  5756 S  0.0  0.0  0:00.00 ├─ /usr/libexec/dconf-service</span></div>
<div class="t" style="left:2px;top:287px"><span style="color:#888a85"> 2369 logout     20   0  154M  6408  5756 S  0.0  0.0  0:00.00 │  ├─ /usr/libexec/dconf-service</span></div>
<div class="t" style="left:2px;top:302px"><span style="color:#888a85"> 2368 logout     20   0  154M  6408  5756 S  0.0  0.0  0:00.00 │  └─ /usr/libexec/dconf-service</span></div>
<div class="t" style="left:2px;top:317px"><span style="color:#888a85"> 2123 logout     20   0  557M 72508 44476 S  9.2  0.2  5:09.93 ├─ /bin/xfce4-terminal</span></div>
<div class="t" style="left:2px;top:332px"><span style="color:#888a85"> 2353 logout     20   0  557M 72508 44476 S  0.0  0.2  0:00.00 │  ├─ /bin/xfce4-terminal</span></div>
<div class="t" style="left:2px;top:347px"><span style="color:#888a85"> 2323 logout     20   0  7896  4308  3588 S  0.0  0.0  0:00.00 │  ├─ bash</span></div>
<div class="t" style="left:2px;top:362px"><span style="color:#888a85"> 2631 logout     20   0 16500  9932  5700 S  0.0  0.0  0:00.06 │  │  └─ lynx gopher://i-logout.cz</span></div>
<div class="t" style="left:2px;top:377px"><span style="color:#888a85"> 2301 logout     20   0  7896  4084  3544 S  0.0  0.0  0:00.00 │  ├─ bash</span></div>
<div class="t" style="left:2px;top:392px"><span style="color:#888a85"> 2306 logout     20   0 10832  5920  5420 S  0.0  0.0  0:00.01 │  │  └─ ssh -Y root@192.168.1.179</span></div>
<div class="t" style="left:2px;top:407px"><span style="color:#888a85"> 2159 logout     20   0  7896  4112  3564 S  0.0  0.0  0:00.00 │  ├─ bash</span></div>
<div class="t" style="left:2px;top:422px"><span style="color:#888a85"> 2162 logout     20   0 10936  5900  5420 S  0.0  0.0  0:00.05 │  │  └─ ssh hracka.org</span></div>
<div class="t" style="left:2px;top:437px"><span style="color:#888a85"> 2148 logout     20   0  7896  4136  3600 S  0.0  0.0  0:00.00 │  ├─ bash</span></div>
<div class="t" style="left:2px;top:452px"><span style="color:#888a85"> 2149 logout     20   0 10908  6108  5404 S  0.7  0.0  0:12.20 │  │  └─ ssh -Y root@192.168.1.179</span></div>
<div class="t" style="left:2px;top:467px"><span style="color:#888a85"> 2138 logout     20   0  7896  4116  3572 S  0.0  0.0  0:00.00 │  ├─ bash</span></div>
<div class="t" style="left:2px;top:482px"><span style="color:#06989a"> 2139 root       20   0 </span><span style="color:#8ae234;font-weight:bold"> 9</span><span style="color:#06989a">168</span><span style="color:#06989a"> </span><span style="color:#8ae234;font-weight:bold"> 4</span><span style="color:#06989a">060</span><span style="color:#06989a"> </span><span style="color:#8ae234;font-weight:bold"> 3</span><span style="color:#06989a">548</span><span style="color:#06989a"> </span><span style="color:#06989a">S</span><span style="color:#06989a">  0.0  0.0  0:00.01 │  │  └─ sudo dmesg -Hw</span></div>
<div class="t" style="left:2px;top:497px"><span style="color:#06989a"> 2140 root       20   0 </span><span style="color:#8ae234;font-weight:bold"> 6</span><span style="color:#06989a">408</span><span style="color:#06989a"> </span><span style="color:#8ae234;font-weight:bold"> 2</span><span style="color:#06989a">524</span><span style="color:#06989a"> </span><span style="color:#8ae234;font-weight:bold"> 2</span><span style="color:#06989a">264</span><span style="color:#06989a"> </span><span style="color:#06989a">S</span><span style="color:#06989a">  0.0  0.0  0:00.01 │  │     └─ dmesg -Hw</span></div>
<div class="t" style="left:2px;top:512px"><span style="color:#888a85"> 2128 logout     20   0  7896  4288  3568 S  0.0  0.0  0:00.00 │  ├─ bash</span></div>
<div class="t" style="left:2px;top:527px"><span style="color:#06989a"> 2129 root       20   0 </span><span style="color:#8ae234;font-weight:bold"> 9</span><span style="color:#06989a">168</span><span style="color:#06989a"> </span><span style="color:#8ae234;font-weight:bold"> 4</span><span style="color:#06989a">060</span><span style="color:#06989a"> </span><span style="color:#8ae234;font-weight:bold"> 3</span><span style="color:#06989a">544</span><span style="color:#06989a"> </span><span style="color:#06989a">S</span><span style="color:#06989a">  0.0  0.0  0:00.01 │  │  └─ sudo htop</span></div>
<div class="t" style="left:2px;top:542px"><span style="color:#06989a"> 2130 root       20   0 </span><span style="color:#8ae234;font-weight:bold"> 8</span><span style="color:#06989a">676</span><span style="color:#06989a"> </span><span style="color:#8ae234;font-weight:bold"> 4</span><span style="color:#06989a">404</span><span style="color:#06989a"> </span><span style="color:#8ae234;font-weight:bold"> 3</span><span style="color:#06989a">220</span><span style="color:#06989a"> </span><span style="color:#4e9a06">R</span><span style="color:#06989a">  1.3  0.0  0:54.06 │  │     └─ htop</span></div>
<div class="t" style="left:2px;top:557px"><span style="color:#888a85"> 2125 logout     20   0  557M 72508 44476 S  0.0  0.2  0:00.01 │  ├─ /bin/xfce4-terminal</span></div>
<div class="t" style="left:2px;top:572px"><span style="color:#06989a">F1</span><span style="color:#000000">Help   </span><span style="color:#06989a">F2</span><span style="color:#000000">Setup  </span><span style="color:#06989a">F3</span><span style="color:#000000">Search </span><span style="color:#06989a">F4</span><span style="color:#000000">Filter </span><span style="color:#06989a">F5</span><span style="color:#000000">Sorted</span><span style="color:#06989a">F6</span><span style="color:#000000">Collap</span><span style="color:#06989a">F7</span><span style="color:#000000">Nice - </span><span style="color:#06989a">F8</span><span style="color:#000000">Nice + </span><span style="color:#06989a">F9</span><span style="color:#000000">Kill   </span><span style="color:#06989a">F10</span><span style="color:#000000">Quit</span></div>
<div class="t" style="left:802px;top:47px"><span style="color:#4e9a06">[  +0.000965]</span><span style="color:#eeeeec"> </span><span style="color:#c4a000">scsi 5:0:0:0</span><span style="color:#eeeeec">: Attached scsi generic sg2 type 5</span></div>
<div class="t" style="left:802px;top:62px"><span style="color:#4e9a06">[  +0.013293]</span><span style="color:#eeeeec"> </span><span style="color:#c4a000">sr 5:0:0:0</span><span style="color:#eeeeec">: [sr0] scsi3-mmc drive: 48x/12x writer dvd-ram cd/rw xa/form2 cdda tray</span></div>
<div class="t" style="left:802px;top:77px"><span style="color:#4e9a06">[  +0.000002]</span><span style="color:#eeeeec"> </span><span style="color:#c4a000">cdrom</span><span style="color:#eeeeec">: Uniform CD-ROM driver Revision: 3.20</span></div>
<div class="t" style="left:802px;top:92px"><span style="color:#4e9a06">[  +0.038171]</span><span style="color:#eeeeec"> </span><span style="color:#c4a000">sr 5:0:0:0</span><span style="color:#eeeeec">: Attached scsi CD-ROM sr0</span></div>
<div class="t" style="left:802px;top:107px"><span style="color:#4e9a06">[  +0.273789]</span><span style="color:#eeeeec"> </span><span style="color:#c4a000">EXT4-fs (sda1)</span><span style="color:#eeeeec">: re-mounted. Opts: (null)</span></div>
<div class="t" style="left:802px;top:122px"><span style="color:#4e9a06">[  +0.141089]</span><span style="color:#eeeeec"> </span><span style="color:#c4a000">udevd[1051]</span><span style="color:#eeeeec">: starting version 3.2.9</span></div>
<div class="t" style="left:802px;top:137px"><span style="color:#4e9a06">[  +0.004007]</span><span style="color:#eeeeec"> </span><span style="color:#c4a000">FS-Cache</span><span style="color:#eeeeec">: Loaded</span></div>
<div class="t" style="left:802px;top:152px"><span style="color:#4e9a06">[  +0.007083]</span><span style="color:#eeeeec"> </span><span style="color:#c4a000">udevd[1051]</span><span style="color:#eeeeec">: starting eudev-3.2.9</span></div>
<div class="t" style="left:802px;top:167px"><span style="color:#4e9a06">[  +0.033382]</span><span style="color:#eeeeec"> </span><span style="color:#c4a000">RPC</span><span style="color:#eeeeec">: Registered named UNIX socket transport module.</span></div>
<div class="t" style="left:802px;top:182px"><span style="color:#4e9a06">[  +0.000001]</span><span style="color:#eeeeec"> </span><span style="color:#c4a000">RPC</span><span style="color:#eeeeec">: Registered udp transport module.</span></div>
<div class="t" style="left:802px;top:197px"><span style="color:#4e9a06">[  +0.000001]</span><span style="color:#eeeeec"> </span><span style="color:#c4a000">RPC</span><span style="color:#eeeeec">: Registered tcp transport module.</span></div>
<div class="t" style="left:802px;top:212px"><span style="color:#4e9a06">[  +0.000000]</span><span style="color:#eeeeec"> </span><span style="color:#c4a000">RPC</span><span style="color:#eeeeec">: Registered tcp NFSv4.1 backchannel transport module.</span></div>
<div class="t" style="left:802px;top:227px"><span style="color:#4e9a06">[  +0.061560]</span><span style="color:#eeeeec"> </span><span style="color:#c4a000">FS-Cache</span><span style="color:#eeeeec">: Netfs 'nfs' registered for caching</span></div>
<div class="t" style="left:802px;top:242px"><span style="color:#4e9a06">[  +0.187350]</span><span style="color:#eeeeec"> </span><span style="color:#c4a000">nouveau 0000:01:00.0</span><span style="color:#eeeeec">: vgaarb: changed VGA decodes: olddecodes=io+mem,decodes=none:owns=none</span></div>
<div class="t" style="left:802px;top:257px"><span style="color:#4e9a06">[  +0.177580]</span><span style="color:#eeeeec"> </span><span style="color:#c4a000">Bluetooth</span><span style="color:#eeeeec">: BNEP (Ethernet Emulation) ver 1.3</span></div>
<div class="t" style="left:802px;top:272px"><span style="color:#4e9a06">[  +0.000002]</span><span style="color:#eeeeec"> </span><span style="color:#c4a000">Bluetooth</span><span style="color:#eeeeec">: BNEP filters: protocol multicast</span></div>
<div class="t" style="left:802px;top:287px"><span style="color:#4e9a06">[  +0.000008]</span><span style="color:#eeeeec"> </span><span style="color:#c4a000">Bluetooth</span><span style="color:#eeeeec">: BNEP socket layer initialized</span></div>
<div class="t" style="left:802px;top:302px"><span style="color:#4e9a06">[  +0.020737]</span><span style="color:#eeeeec"> </span><span style="color:#c4a000">NET</span><span style="color:#eeeeec">: Registered protocol family 38</span></div>
<div class="t" style="left:802px;top:317px"><span style="color:#4e9a06">[  +0.560986]</span><span style="color:#eeeeec"> </span><span style="color:#c4a000">tg3 0004:01:00.2 enP4p1s0f2</span><span style="color:#eeeeec">: Link is up at 1000 Mbps, full duplex</span></div>
<div class="t" style="left:802px;top:332px"><span style="color:#4e9a06">[  +0.000002]</span><span style="color:#eeeeec"> </span><span style="color:#c4a000">tg3 0004:01:00.2 enP4p1s0f2</span><span style="color:#eeeeec">: Flow control is on for TX and on for RX</span></div>
<div class="t" style="left:802px;top:347px"><span style="color:#4e9a06">[  +0.000001]</span><span style="color:#eeeeec"> </span><span style="color:#c4a000">tg3 0004:01:00.2 enP4p1s0f2</span><span style="color:#eeeeec">: EEE is disabled</span></div>
<div class="t" style="left:802px;top:362px"><span style="color:#4e9a06">[  +0.007804]</span><span style="color:#eeeeec"> </span><span style="color:#c4a000">IPv6</span><span style="color:#eeeeec">: ADDRCONF(NETDEV_CHANGE): enP4p1s0f2: link becomes ready</span></div>
<div class="t" style="left:802px;top:377px"><span style="color:#4e9a06">[  +6.530902]</span><span style="color:#eeeeec"> </span><span style="color:#c4a000">elogind-daemon[1211]</span><span style="color:#eeeeec">: New seat seat0.</span></div>
<div class="t" style="left:802px;top:392px"><span style="color:#4e9a06">[  +0.083425]</span><span style="color:#eeeeec"> </span><span style="color:#c4a000">elogind-daemon[1211]</span><span style="color:#eeeeec">: Watching system buttons on /dev/input/event1 (Hoksi Technology DURGOD Tauru</span></div>
<div class="t" style="left:802px;top:407px"><span style="color:#eeeeec">s K320)</span></div>
<div class="t" style="left:802px;top:422px"><span style="color:#4e9a06">[  +0.000219]</span><span style="color:#eeeeec"> </span><span style="color:#c4a000">elogind-daemon[1211]</span><span style="color:#eeeeec">: Watching system buttons on /dev/input/event6 (Hoksi Technology DURGOD Tauru</span></div>
<div class="t" style="left:802px;top:437px"><span style="color:#eeeeec">s K320 System Control)</span></div>
<div class="t" style="left:802px;top:452px"><span style="color:#4e9a06">[  +0.000219]</span><span style="color:#eeeeec"> </span><span style="color:#c4a000">elogind-daemon[1211]</span><span style="color:#eeeeec">: Watching system buttons on /dev/input/event7 (Hoksi Technology DURGOD Tauru</span></div>
<div class="t" style="left:802px;top:467px"><span style="color:#eeeeec">s K320 Consumer Control)</span></div>
<div class="t" style="left:802px;top:482px"><span style="color:#4e9a06">[  +0.000215]</span><span style="color:#eeeeec"> </span><span style="color:#c4a000">elogind-daemon[1211]</span><span style="color:#eeeeec">: Watching system buttons on /dev/input/event8 (Hoksi Technology DURGOD Tauru</span></div>
<div class="t" style="left:802px;top:497px"><span style="color:#eeeeec">s K320 Keyboard)</span></div>
<div class="t" style="left:802px;top:512px"><span style="color:#4e9a06">[  +0.035051]</span><span style="color:#eeeeec"> </span><span style="color:#c4a000">elogind-daemon[1211]</span><span style="color:#eeeeec">: New session 1 of user logout.</span></div>
<div class="t" style="left:802px;top:527px"><span style="color:#8ae234;font-weight:bold">[Dec 2 20:40]</span><span style="color:#eeeeec"> </span><span style="color:#c4a000">Bluetooth</span><span style="color:#eeeeec">: RFCOMM TTY layer initialized</span></div>
<div class="t" style="left:802px;top:542px"><span style="color:#4e9a06">[  +0.000008]</span><span style="color:#eeeeec"> </span><span style="color:#c4a000">Bluetooth</span><span style="color:#eeeeec">: RFCOMM socket layer initialized</span></div>
<div class="t" style="left:802px;top:557px"><span style="color:#4e9a06">[  +0.000011]</span><span style="color:#eeeeec"> </span><span style="color:#c4a000">Bluetooth</span><span style="color:#eeeeec">: RFCOMM ver 1.11</span></div><div style="position:absolute;left:801px;top:571px;width:9px;height:17px;background:transparent;box-sizing:border-box;border:1px solid #eeeeec;box-shadow:inset 0 0 0 0.5px #eeeeec"></div>
<div class="t" style="left:2px;top:647px"><span style="color:#eeeeec">root@nice:~# uname -a</span></div>
<div class="t" style="left:2px;top:662px"><span style="color:#eeeeec">Linux nice 4.9.182-xxxx-std-ipv6-64 #768030 SMP Tue Jun 18 08:30:59 UTC 2019 x86_64 Intel(R) Atom(TM) CPU N2800  @ 1.86GHz GenuineIntel GNU/Linux</span></div>
<div class="t" style="left:2px;top:677px"><span style="color:#eeeeec">root@nice:~# uptime</span></div>
<div class="t" style="left:2px;top:692px"><span style="color:#eeeeec"> 21:30:42 up 474 days,  9:29,  3 users,  load average: 0.37, 0.37, 0.36</span></div>
<div class="t" style="left:2px;top:707px"><span style="color:#eeeeec">root@nice:~# w</span></div>
<div class="t" style="left:2px;top:722px"><span style="color:#eeeeec"> 21:30:45 up 474 days,  9:30,  3 users,  load average: 0.37, 0.37, 0.36</span></div>
<div class="t" style="left:2px;top:737px"><span style="color:#eeeeec">USER     TTY      FROM              LOGIN@   IDLE   JCPU   PCPU WHAT</span></div>
<div class="t" style="left:2px;top:752px"><span style="color:#eeeeec">logout   pts/0    217.119.121.102  25Nov20  4:11   3:34   3:34  poezio-venv/bin/python3 -m poezio --custom-version 37cebbce 2020-07-24 12:18:47 +0200</span></div>
<div class="t" style="left:2px;top:767px"><span style="color:#eeeeec">logout   pts/3    217.119.121.102  26Nov20  4.00s  3.68s  0.02s sshd: logout [priv]</span></div>
<div class="t" style="left:2px;top:782px"><span style="color:#eeeeec">root     pts/2    217.119.121.102: 09Jul20 13days 12:29  12:29  /usr/bin/php ./aprsgb.php</span></div>
<div class="t" style="left:2px;top:797px"><span style="color:#eeeeec">root@nice:~# </span></div>
<div class="t" style="left:2px;top:1172px"><span style="color:#4e9a06">[ </span><span style="color:#8ae234">hracka</span><span style="color:#4e9a06"> ][</span><span style="color:#eeeeec">                                                                        </span><span style="color:#eeeeec">0$ poezio  1$ irssi  2-$ aprsgb  </span><span style="color:#ef2929">(</span><span style="color:#eeeeec">3*$ nice-0</span><span style="color:#ef2929">)</span><span style="color:#eeeeec">  4$ bash</span><span style="color:#eeeeec">                                                                        </span><span style="color:#4e9a06">][</span><span style="color:#eeeeec"> </span><span style="color:#729fcf">12/02</span><span style="color:#eeeeec"> </span><span style="color:#eeeeec">21:41</span><span style="color:#eeeeec"> </span><span style="color:#4e9a06">]</span></div><div style="position:absolute;left:92px;top:796px;width:9px;height:17px;background:transparent;box-sizing:border-box;border:1px solid #eeeeec;box-shadow:inset 0 0 0 0.5px #eeeeec"></div>
<div style="position:absolute;left:1602px;top:80px;width:21px;height:15px;background:#d3d7cf;"></div>
<div style="position:absolute;left:2029px;top:95px;width:77px;height:15px;background:#3465a4;"></div>
<div style="position:absolute;left:1602px;top:1145px;width:938px;height:15px;background:#3465a4;"></div>
<div style="position:absolute;left:2533px;top:1175px;width:7px;height:15px;background:#d3d7cf;"></div>
<div class="t" style="left:1602px;top:125px"><span style="color:#d3d7cf">       Bongusta!</span></div>
<div class="t" style="left:1602px;top:140px"><span style="color:#d3d7cf">       =========</span></div>
<div class="t" style="left:1602px;top:170px"><span style="color:#d3d7cf">       define: bongusta</span></div>
<div class="t" style="left:1602px;top:185px"><span style="color:#d3d7cf">           1. in esperanto:  tasty, luscious, palatable</span></div>
<div class="t" style="left:1602px;top:200px"><span style="color:#d3d7cf">           2. on gopher: a very simple phlog aggregator</span></div>
<div class="t" style="left:1602px;top:230px"><span style="color:#d3d7cf">       If you know a phlog, that should be here, please</span></div>
<div class="t" style="left:1602px;top:245px"><span style="color:#d3d7cf">       let me know at logout128@gmail.com</span></div>
<div class="t" style="left:1602px;top:275px"><span style="color:#d3d7cf"> (DIR) </span><span style="color:#fce94f">Now aggregating 75 phlogs!</span></div>
<div class="t" style="left:1602px;top:305px"><span style="color:#d3d7cf">       2020/12/01</span></div>
<div class="t" style="left:1602px;top:320px"><span style="color:#d3d7cf"> (DIR) </span><span style="color:#4e9a06">Alex Schroeder's phlog</span></div>
<div class="t" style="left:1602px;top:335px"><span style="color:#d3d7cf"> (DIR) </span><span style="color:#4e9a06">Cosmic Voyage Transmission Log</span></div>
<div class="t" style="left:1602px;top:365px"><span style="color:#d3d7cf">       2020/11/30</span></div>
<div class="t" style="left:1602px;top:380px"><span style="color:#d3d7cf"> (DIR) </span><span style="color:#4e9a06">A Gopher Hole of Verisimilitudes</span></div>
<div class="t" style="left:1602px;top:395px"><span style="color:#d3d7cf"> (DIR) </span><span style="color:#4e9a06">Alex Schroeder's phlog</span></div>
<div class="t" style="left:1602px;top:410px"><span style="color:#d3d7cf"> (DIR) </span><span style="color:#4e9a06">Cosmic Voyage Transmission Log</span></div>
<div class="t" style="left:1602px;top:425px"><span style="color:#d3d7cf"> (DIR) </span><span style="color:#4e9a06">Solene's percent</span></div>
<div class="t" style="left:1602px;top:455px"><span style="color:#d3d7cf">       2020/11/29</span></div>
<div class="t" style="left:1602px;top:470px"><span style="color:#d3d7cf"> (DIR) </span><span style="color:#4e9a06">Boris Shminke's gopherlog</span></div>
<div class="t" style="left:1602px;top:485px"><span style="color:#d3d7cf"> (DIR) </span><span style="color:#4e9a06">Cosmic Voyage Transmission Log</span></div>
<div class="t" style="left:1602px;top:500px"><span style="color:#d3d7cf"> (DIR) </span><span style="color:#4e9a06">Jirka's Phlog</span></div>
<div class="t" style="left:1602px;top:515px"><span style="color:#d3d7cf"> (DIR) </span><span style="color:#4e9a06">Sloum's Circumlunar Phlog</span></div>
<div class="t" style="left:1602px;top:530px"><span style="color:#d3d7cf"> (DIR) </span><span style="color:#4e9a06">The Boston Diaries</span></div>
<div class="t" style="left:1602px;top:545px"><span style="color:#d3d7cf"> (DIR) </span><span style="color:#4e9a06">Tomasino's Phlog</span></div>
<div class="t" style="left:1602px;top:575px"><span style="color:#d3d7cf">       2020/11/28</span></div>
<div class="t" style="left:1602px;top:590px"><span style="color:#d3d7cf"> (DIR) </span><span style="color:#4e9a06">Sloum's Circumlunar Phlog</span></div>
<div class="t" style="left:1602px;top:605px"><span style="color:#d3d7cf"> (DIR) </span><span style="color:#4e9a06">The Xiled Rumination Construct Phlog</span></div>
<div class="t" style="left:1602px;top:635px"><span style="color:#d3d7cf">       2020/11/27</span></div>
<div class="t" style="left:1602px;top:650px"><span style="color:#d3d7cf"> (DIR) </span><span style="color:#4e9a06">Alex Schroeder's phlog</span></div>
<div class="t" style="left:1602px;top:680px"><span style="color:#d3d7cf">       2020/11/26</span></div>
<div class="t" style="left:1602px;top:695px"><span style="color:#d3d7cf"> (DIR) </span><span style="color:#4e9a06">Alex Schroeder's phlog</span></div>
<div class="t" style="left:1602px;top:710px"><span style="color:#d3d7cf"> (DIR) </span><span style="color:#4e9a06">The Boston Diaries</span></div>
<div class="t" style="left:1602px;top:725px"><span style="color:#d3d7cf"> (DIR) </span><span style="color:#4e9a06">Tomasino's Phlog</span></div>
<div class="t" style="left:1602px;top:740px"><span style="color:#d3d7cf"> (DIR) </span><span style="color:#4e9a06">Undo</span></div>
<div class="t" style="left:1602px;top:770px"><span style="color:#d3d7cf">       2020/11/25</span></div>
<div class="t" style="left:1602px;top:785px"><span style="color:#d3d7cf"> (DIR) </span><span style="color:#4e9a06">Alex Schroeder's phlog</span></div>
<div class="t" style="left:1602px;top:800px"><span style="color:#d3d7cf"> (DIR) </span><span style="color:#4e9a06">FAX SEX</span></div>
<div class="t" style="left:1602px;top:815px"><span style="color:#d3d7cf"> (DIR) </span><span style="color:#4e9a06">Lich's Musings</span></div>
<div class="t" style="left:1602px;top:830px"><span style="color:#d3d7cf"> (DIR) </span><span style="color:#4e9a06">Raymii.org</span></div>
<div class="t" style="left:1602px;top:845px"><span style="color:#d3d7cf"> (DIR) </span><span style="color:#4e9a06">The Xiled Rumination Construct Phlog</span></div>
<div class="t" style="left:1602px;top:875px"><span style="color:#d3d7cf">       2020/11/24</span></div>
<div class="t" style="left:1602px;top:890px"><span style="color:#d3d7cf"> (DIR) </span><span style="color:#4e9a06">A Gopher Hole of Verisimilitudes</span></div>
<div class="t" style="left:1602px;top:905px"><span style="color:#d3d7cf"> (DIR) </span><span style="color:#4e9a06">Boris Shminke's gopherlog</span></div>
<div class="t" style="left:1602px;top:920px"><span style="color:#d3d7cf"> (DIR) </span><span style="color:#4e9a06">RPoD Phlog</span></div>
<div class="t" style="left:1602px;top:935px"><span style="color:#d3d7cf"> (DIR) </span><span style="color:#4e9a06">Sloum's Phlog @ colorfield.space</span></div>
<div class="t" style="left:1602px;top:950px"><span style="color:#d3d7cf"> (DIR) </span><span style="color:#4e9a06">Solene's percent</span></div>
<div class="t" style="left:1602px;top:965px"><span style="color:#d3d7cf"> (DIR) </span><span style="color:#4e9a06">The Boston Diaries</span></div>
<div class="t" style="left:1602px;top:980px"><span style="color:#d3d7cf"> (DIR) </span><span style="color:#4e9a06">Undo</span></div>
<div class="t" style="left:1602px;top:1010px"><span style="color:#d3d7cf">       2020/11/23</span></div>
<div class="t" style="left:1602px;top:1025px"><span style="color:#d3d7cf"> (DIR) </span><span style="color:#4e9a06">Alex Schroeder's phlog</span></div>
<div class="t" style="left:1602px;top:1040px"><span style="color:#d3d7cf"> (DIR) </span><span style="color:#4e9a06">jstg's phlog</span></div>
<div class="t" style="left:1602px;top:1055px"><span style="color:#d3d7cf"> (DIR) </span><span style="color:#4e9a06">The Boston Diaries</span></div>
<div class="t" style="left:1602px;top:1085px"><span style="color:#d3d7cf">       2020/11/22</span></div>
<div class="t" style="left:1602px;top:1100px"><span style="color:#d3d7cf"> (DIR) </span><span style="color:#4e9a06">Alex Schroeder's phlog</span></div>
<div class="t" style="left:1602px;top:1115px"><span style="color:#d3d7cf"> (DIR) </span><span style="color:#4e9a06">The Boston Diaries</span></div>
<div class="t" style="left:1602px;top:80px"><span style="color:#000000">←←←</span><span style="color:#d3d7cf">                                                                                                              </span><span style="color:#75507b">Gopher Menu (p1 of 8)</span></div>
<div class="t" style="left:1602px;top:95px"><span style="color:#d3d7cf">                                                             </span><span style="color:#fce94f">Gopher Menu</span></div>
<div class="t" style="left:1602px;top:1145px"><span style="color:#fce94f">-- press space for next page --</span></div>
<div class="t" style="left:1602px;top:1160px"><span style="color:#d3d7cf">  Arrow keys: Up and Down to move.  Right to follow a link; Left to go back.</span></div>
<div class="t" style="left:1602px;top:1175px"><span style="color:#d3d7cf"> H)elp O)ptions P)rint G)o M)ain screen Q)uit /=search [delete]=history list</span></div>
<div style="position:absolute;left:2562px;top:80px;width:938px;height:15px;background:#06989a;"></div>
<div style="position:absolute;left:2562px;top:95px;width:938px;height:15px;background:#3465a4;"></div>
<div style="position:absolute;left:2562px;top:110px;width:938px;height:15px;background:#3465a4;"></div>
<div style="position:absolute;left:2562px;top:125px;width:938px;height:15px;background:#3465a4;"></div>
<div style="position:absolute;left:2562px;top:140px;width:938px;height:15px;background:#3465a4;"></div>
<div style="position:absolute;left:2562px;top:155px;width:938px;height:15px;background:#3465a4;"></div>
<div style="position:absolute;left:2562px;top:170px;width:938px;height:15px;background:#3465a4;"></div>
<div style="position:absolute;left:2562px;top:185px;width:938px;height:15px;background:#3465a4;"></div>
<div style="position:absolute;left:2562px;top:200px;width:938px;height:15px;background:#3465a4;"></div>
<div style="position:absolute;left:2562px;top:215px;width:938px;height:15px;background:#3465a4;"></div>
<div style="position:absolute;left:2562px;top:230px;width:938px;height:15px;background:#3465a4;"></div>
<div style="position:absolute;left:2562px;top:245px;width:938px;height:15px;background:#3465a4;"></div>
<div style="position:absolute;left:2562px;top:260px;width:938px;height:15px;background:#3465a4;"></div>
<div style="position:absolute;left:2562px;top:275px;width:938px;height:15px;background:#3465a4;"></div>
<div style="position:absolute;left:2562px;top:290px;width:938px;height:15px;background:#3465a4;"></div>
<div style="position:absolute;left:2562px;top:305px;width:938px;height:15px;background:#3465a4;"></div>
<div style="position:absolute;left:2562px;top:320px;width:938px;height:15px;background:#3465a4;"></div>
<div style="position:absolute;left:2562px;top:335px;width:938px;height:15px;background:#3465a4;"></div>
<div style="position:absolute;left:2562px;top:350px;width:938px;height:15px;background:#3465a4;"></div>
<div style="position:absolute;left:2562px;top:365px;width:938px;height:15px;background:#3465a4;"></div>
<div style="position:absolute;left:2562px;top:380px;width:938px;height:15px;background:#3465a4;"></div>
<div style="position:absolute;left:2562px;top:395px;width:938px;height:15px;background:#3465a4;"></div>
<div style="position:absolute;left:2562px;top:410px;width:938px;height:15px;background:#3465a4;"></div>
<div style="position:absolute;left:2562px;top:425px;width:938px;height:15px;background:#3465a4;"></div>
<div style="position:absolute;left:2562px;top:440px;width:938px;height:15px;background:#3465a4;"></div>
<div style="position:absolute;left:2562px;top:455px;width:938px;height:15px;background:#3465a4;"></div>
<div style="position:absolute;left:2562px;top:470px;width:938px;height:15px;background:#3465a4;"></div>
<div style="position:absolute;left:2562px;top:485px;width:938px;height:15px;background:#3465a4;"></div>
<div style="position:absolute;left:2562px;top:500px;width:938px;height:15px;background:#3465a4;"></div>
<div style="position:absolute;left:2562px;top:515px;width:938px;height:15px;background:#3465a4;"></div>
<div style="position:absolute;left:2562px;top:530px;width:938px;height:15px;background:#3465a4;"></div>
<div style="position:absolute;left:2562px;top:545px;width:938px;height:15px;background:#3465a4;"></div>
<div style="position:absolute;left:2583px;top:95px;width:119px;height:15px;background:#d3d7cf;"></div>
<div style="position:absolute;left:2569px;top:365px;width:455px;height:15px;background:#06989a;"></div>
<div style="position:absolute;left:2716px;top:215px;width:623px;height:15px;background:#d3d7cf;"></div>
<div style="position:absolute;left:2716px;top:230px;width:623px;height:15px;background:#d3d7cf;"></div>
<div style="position:absolute;left:2716px;top:245px;width:623px;height:15px;background:#d3d7cf;"></div>
<div style="position:absolute;left:2716px;top:260px;width:623px;height:15px;background:#d3d7cf;"></div>
<div style="position:absolute;left:2716px;top:275px;width:623px;height:15px;background:#d3d7cf;"></div>
<div style="position:absolute;left:2716px;top:290px;width:623px;height:15px;background:#d3d7cf;"></div>
<div style="position:absolute;left:2716px;top:305px;width:623px;height:15px;background:#d3d7cf;"></div>
<div style="position:absolute;left:2716px;top:320px;width:623px;height:15px;background:#d3d7cf;"></div>
<div style="position:absolute;left:2716px;top:335px;width:623px;height:15px;background:#d3d7cf;"></div>
<div style="position:absolute;left:2716px;top:350px;width:623px;height:15px;background:#d3d7cf;"></div>
<div style="position:absolute;left:2716px;top:365px;width:623px;height:15px;background:#d3d7cf;"></div>
<div style="position:absolute;left:2716px;top:380px;width:623px;height:15px;background:#d3d7cf;"></div>
<div style="position:absolute;left:2716px;top:395px;width:623px;height:15px;background:#d3d7cf;"></div>
<div style="position:absolute;left:2716px;top:410px;width:623px;height:15px;background:#d3d7cf;"></div>
<div style="position:absolute;left:2716px;top:425px;width:623px;height:15px;background:#d3d7cf;"></div>
<div style="position:absolute;left:2716px;top:440px;width:623px;height:15px;background:#d3d7cf;"></div>
<div style="position:absolute;left:2765px;top:305px;width:280px;height:15px;background:#000;"></div>
<div style="position:absolute;left:2765px;top:350px;width:49px;height:15px;background:#000;"></div>
<div style="position:absolute;left:2919px;top:410px;width:56px;height:15px;background:#06989a;"></div>
<div style="position:absolute;left:3479px;top:575px;width:21px;height:15px;background:#3465a4;"></div>
<div style="position:absolute;left:2576px;top:590px;width:77px;height:15px;background:#06989a;"></div>
<div style="position:absolute;left:2667px;top:590px;width:77px;height:15px;background:#06989a;"></div>
<div style="position:absolute;left:2758px;top:590px;width:77px;height:15px;background:#06989a;"></div>
<div style="position:absolute;left:2849px;top:590px;width:84px;height:15px;background:#06989a;"></div>
<div style="position:absolute;left:2947px;top:590px;width:84px;height:15px;background:#06989a;"></div>
<div style="position:absolute;left:3045px;top:590px;width:77px;height:15px;background:#06989a;"></div>
<div style="position:absolute;left:3136px;top:590px;width:77px;height:15px;background:#06989a;"></div>
<div style="position:absolute;left:3227px;top:590px;width:77px;height:15px;background:#06989a;"></div>
<div style="position:absolute;left:3318px;top:590px;width:84px;height:15px;background:#06989a;"></div>
<div style="position:absolute;left:3416px;top:590px;width:84px;height:15px;background:#06989a;"></div>
<div style="position:absolute;left:2565px;top:102px;width:1px;height:451px;background:#d3d7cf;"></div>
<div style="position:absolute;left:3027px;top:102px;width:1px;height:451px;background:#d3d7cf;"></div>
<div style="position:absolute;left:2565px;top:102px;width:463px;height:1px;background:#d3d7cf;"></div>
<div style="position:absolute;left:2565px;top:522px;width:463px;height:1px;background:#d3d7cf;"></div>
<div style="position:absolute;left:2565px;top:552px;width:463px;height:1px;background:#d3d7cf;"></div>
<div style="position:absolute;left:2880px;top:110px;width:1px;height:405px;background:#d3d7cf;"></div>
<div style="position:absolute;left:2936px;top:110px;width:1px;height:405px;background:#d3d7cf;"></div>
<div style="position:absolute;left:3034px;top:102px;width:1px;height:451px;background:#d3d7cf;"></div>
<div style="position:absolute;left:3496px;top:110px;width:1px;height:443px;background:#d3d7cf;"></div>
<div style="position:absolute;left:3034px;top:102px;width:456px;height:1px;background:#d3d7cf;"></div>
<div style="position:absolute;left:3034px;top:522px;width:463px;height:1px;background:#d3d7cf;"></div>
<div style="position:absolute;left:3034px;top:552px;width:463px;height:1px;background:#d3d7cf;"></div>
<div style="position:absolute;left:3349px;top:110px;width:1px;height:405px;background:#d3d7cf;"></div>
<div style="position:absolute;left:3405px;top:110px;width:1px;height:405px;background:#d3d7cf;"></div>
<div style="position:absolute;left:2569px;top:95px;width:7px;height:15px;background:#3465a4;"></div>
<div style="position:absolute;left:2583px;top:95px;width:119px;height:15px;background:#d3d7cf;"></div>
<div style="position:absolute;left:2989px;top:95px;width:35px;height:15px;background:#3465a4;"></div>
<div style="position:absolute;left:2716px;top:515px;width:161px;height:15px;background:#3465a4;"></div>
<div style="position:absolute;left:2898px;top:545px;width:119px;height:15px;background:#3465a4;"></div>
<div style="position:absolute;left:3038px;top:95px;width:7px;height:15px;background:#3465a4;"></div>
<div style="position:absolute;left:3052px;top:95px;width:77px;height:15px;background:#3465a4;"></div>
<div style="position:absolute;left:3458px;top:95px;width:35px;height:15px;background:#3465a4;"></div>
<div style="position:absolute;left:3353px;top:545px;width:133px;height:15px;background:#3465a4;"></div>
<div style="position:absolute;left:2716px;top:215px;width:623px;height:240px;background:#d3d7cf;"></div>
<div style="position:absolute;left:2765px;top:305px;width:280px;height:15px;background:#000;"></div>
<div style="position:absolute;left:2765px;top:350px;width:49px;height:15px;background:#000;"></div>
<div style="position:absolute;left:2919px;top:410px;width:56px;height:15px;background:#06989a;"></div>
<div style="position:absolute;left:2726px;top:237px;width:601px;height:194px;border:1px solid #000"></div>
<div style="position:absolute;left:2726px;top:342px;width:603px;height:1px;background:#000;"></div>
<div style="position:absolute;left:2726px;top:402px;width:603px;height:1px;background:#000;"></div>
<div style="position:absolute;left:3003px;top:230px;width:42px;height:15px;background:#d3d7cf;"></div>
<div style="position:absolute;left:2968px;top:335px;width:119px;height:15px;background:#d3d7cf;"></div>
<div class="t" style="left:2562px;top:80px"><span style="color:#d3d7cf">  </span><span style="color:#000000">Left</span><span style="color:#d3d7cf">     </span><span style="color:#000000">File</span><span style="color:#d3d7cf">     </span><span style="color:#000000">Command</span><span style="color:#d3d7cf">     </span><span style="color:#000000">Options</span><span style="color:#d3d7cf">     </span><span style="color:#000000">Right</span></div>
<div class="t" style="left:2562px;top:95px"><span style="color:#d3d7cf"> </span><span style="color:#d3d7cf">&lt;</span><span style="color:#d3d7cf"> </span><span style="color:#000000"> /mnt/old/logout </span><span style="color:#d3d7cf">                                         </span><span style="color:#d3d7cf">.[^]&gt;</span><span style="color:#d3d7cf">  </span><span style="color:#d3d7cf">&lt;</span><span style="color:#d3d7cf"> </span><span style="color:#d3d7cf"> /mnt/pole </span><span style="color:#d3d7cf">                                               </span><span style="color:#d3d7cf">.[^]&gt;\</span></div>
<div class="t" style="left:2562px;top:110px"><span style="color:#d3d7cf"> </span><span style="color:#fce94f">.n</span><span style="color:#d3d7cf">                  </span><span style="color:#fce94f">Name</span><span style="color:#d3d7cf">                      </span><span style="color:#fce94f">Size</span><span style="color:#d3d7cf">   </span><span style="color:#fce94f">Modify time</span><span style="color:#d3d7cf">   </span><span style="color:#fce94f">.n</span><span style="color:#d3d7cf">                  </span><span style="color:#fce94f">Name</span><span style="color:#d3d7cf">                      </span><span style="color:#fce94f">Size</span><span style="color:#d3d7cf">   </span><span style="color:#fce94f">Modify time</span></div>
<div class="t" style="left:2562px;top:125px"><span style="color:#d3d7cf"> </span><span style="color:#d3d7cf">/.links</span><span style="color:#d3d7cf">                                           </span><span style="color:#d3d7cf">45</span><span style="color:#d3d7cf"> </span><span style="color:#d3d7cf">Feb  5  2020</span><span style="color:#d3d7cf">  </span><span style="color:#d3d7cf">/..</span><span style="color:#d3d7cf">                                          </span><span style="color:#d3d7cf">UP--DIR</span><span style="color:#d3d7cf"> </span><span style="color:#d3d7cf">Dec  2 14:42</span></div>
<div class="t" style="left:2562px;top:140px"><span style="color:#d3d7cf"> </span><span style="color:#d3d7cf">/.local</span><span style="color:#d3d7cf">                                           </span><span style="color:#d3d7cf">19</span><span style="color:#d3d7cf"> </span><span style="color:#d3d7cf">Oct 10  2019</span><span style="color:#d3d7cf">  </span><span style="color:#d3d7cf">/lost+found</span><span style="color:#d3d7cf">                                    </span><span style="color:#d3d7cf">16384</span><span style="color:#d3d7cf"> </span><span style="color:#d3d7cf">Nov 17 12:45</span></div>
<div class="t" style="left:2562px;top:155px"><span style="color:#d3d7cf"> </span><span style="color:#d3d7cf">/.mozilla</span><span style="color:#d3d7cf">                                         </span><span style="color:#d3d7cf">66</span><span style="color:#d3d7cf"> </span><span style="color:#d3d7cf">Oct 10  2019</span></div>
<div class="t" style="left:2562px;top:170px"><span style="color:#d3d7cf"> </span><span style="color:#d3d7cf">/.mplayer</span><span style="color:#d3d7cf">                                         </span><span style="color:#d3d7cf">20</span><span style="color:#d3d7cf"> </span><span style="color:#d3d7cf">Dec 30  2019</span></div>
<div class="t" style="left:2562px;top:185px"><span style="color:#d3d7cf"> </span><span style="color:#d3d7cf">/.pki</span><span style="color:#d3d7cf">                                             </span><span style="color:#d3d7cf">19</span><span style="color:#d3d7cf"> </span><span style="color:#d3d7cf">Dec  8  2019</span></div>
<div class="t" style="left:2562px;top:200px"><span style="color:#d3d7cf"> </span><span style="color:#d3d7cf">/.purple</span><span style="color:#d3d7cf">                                         </span><span style="color:#d3d7cf">188</span><span style="color:#d3d7cf"> </span><span style="color:#d3d7cf">Mar 31  2020</span></div>
<div class="t" style="left:2562px;top:215px"><span style="color:#d3d7cf"> </span><span style="color:#d3d7cf">/.ssh</span></div>
<div class="t" style="left:2562px;top:230px"><span style="color:#d3d7cf"> </span><span style="color:#d3d7cf">/.thunderbird</span><span style="color:#d3d7cf">                                                  </span><span style="color:#3465a4">Copy</span></div>
<div class="t" style="left:2562px;top:245px"><span style="color:#d3d7cf"> </span><span style="color:#d3d7cf">/.wicd</span><span style="color:#d3d7cf">                  </span><span style="color:#000000">Source</span></div>
<div class="t" style="left:2562px;top:260px"><span style="color:#d3d7cf"> </span><span style="color:#d3d7cf">/.wine</span><span style="color:#d3d7cf">                  </span><span style="color:#000000">p_02.djvu</span></div>
<div class="t" style="left:2562px;top:275px"><span style="color:#d3d7cf"> </span><span style="color:#fce94f">/Books</span><span style="color:#d3d7cf">                  </span><span style="color:#000000">Target</span></div>
<div class="t" style="left:2562px;top:290px"><span style="color:#d3d7cf"> </span><span style="color:#fce94f">/Code</span><span style="color:#d3d7cf">                   </span><span style="color:#000000">/mnt/pole/Books/Magazines/NarodniPolitika/1889/04-11-98013/p_02.djvu</span></div>
<div class="t" style="left:2562px;top:305px"><span style="color:#d3d7cf"> </span><span style="color:#fce94f">/Disks</span><span style="color:#d3d7cf">                     </span><span style="color:#000000">[</span><span style="color:#d3d7cf">                                                                      </span><span style="color:#000000">]</span><span style="color:#d3d7cf">  </span><span style="color:#000000">57%</span></div>
<div class="t" style="left:2562px;top:320px"><span style="color:#d3d7cf"> </span><span style="color:#fce94f">/Documents</span></div>
<div class="t" style="left:2562px;top:335px"><span style="color:#d3d7cf"> </span><span style="color:#fce94f">/Downloads</span><span style="color:#d3d7cf">                                                </span><span style="color:#000000">Total: 27G/280G</span></div>
<div class="t" style="left:2562px;top:350px"><span style="color:#d3d7cf"> </span><span style="color:#fce94f">/Music</span><span style="color:#d3d7cf">                     </span><span style="color:#000000">[</span><span style="color:#d3d7cf">                                                                      </span><span style="color:#000000">]</span><span style="color:#d3d7cf">  </span><span style="color:#000000">10%</span></div>
<div class="t" style="left:2562px;top:365px"><span style="color:#d3d7cf"> </span><span style="color:#fce94f">/Pictures</span><span style="color:#d3d7cf">               </span><span style="color:#000000">Files processed: 70222/295950</span></div>
<div class="t" style="left:2562px;top:380px"><span style="color:#d3d7cf"> </span><span style="color:#fce94f">/Radio</span><span style="color:#d3d7cf">                  </span><span style="color:#000000">Time: 0:52.52 ETA 8:12.42 (8.77 MB/s)</span></div>
<div class="t" style="left:2562px;top:395px"><span style="color:#d3d7cf"> </span><span style="color:#fce94f">/Sync</span></div>
<div class="t" style="left:2562px;top:410px"><span style="color:#d3d7cf"> </span><span style="color:#fce94f">/Temp</span><span style="color:#d3d7cf">                                             </span><span style="color:#000000">[ </span><span style="color:#3465a4">S</span><span style="color:#000000">kip ]</span><span style="color:#d3d7cf"> </span><span style="color:#000000">[ </span><span style="color:#000000">S</span><span style="color:#3465a4">u</span><span style="color:#000000">spend ]</span><span style="color:#d3d7cf"> </span><span style="color:#000000">[ </span><span style="color:#3465a4">A</span><span style="color:#000000">bort ]</span></div>
<div class="t" style="left:2562px;top:425px"><span style="color:#d3d7cf"> </span><span style="color:#fce94f">/Video</span></div>
<div class="t" style="left:2562px;top:440px"><span style="color:#d3d7cf"> </span><span style="color:#d3d7cf"> .Xauthority</span></div>
<div class="t" style="left:2562px;top:455px"><span style="color:#d3d7cf"> </span><span style="color:#d3d7cf"> .bash_history</span><span style="color:#d3d7cf">                                 </span><span style="color:#d3d7cf">12820</span><span style="color:#d3d7cf"> </span><span style="color:#d3d7cf">May  7  2020</span></div>
<div class="t" style="left:2562px;top:470px"><span style="color:#d3d7cf"> </span><span style="color:#d3d7cf"> .bash_logout</span><span style="color:#d3d7cf">                                     </span><span style="color:#d3d7cf">18</span><span style="color:#d3d7cf"> </span><span style="color:#d3d7cf">Sep 16  2019</span></div>
<div class="t" style="left:2562px;top:485px"><span style="color:#d3d7cf"> </span><span style="color:#d3d7cf"> .bash_profile</span><span style="color:#d3d7cf">                                    </span><span style="color:#d3d7cf">89</span><span style="color:#d3d7cf"> </span><span style="color:#d3d7cf">Sep 16  2019</span></div>
<div class="t" style="left:2562px;top:500px"><span style="color:#d3d7cf"> </span><span style="color:#d3d7cf"> .bashrc</span><span style="color:#d3d7cf">                                         </span><span style="color:#d3d7cf">135</span><span style="color:#d3d7cf"> </span><span style="color:#d3d7cf">Sep 16  2019</span></div>
<div class="t" style="left:2562px;top:515px"><span style="color:#d3d7cf">                       </span><span style="color:#fce94f">127,328 B in 18 files</span></div>
<div class="t" style="left:2562px;top:530px"><span style="color:#d3d7cf"> </span><span style="color:#d3d7cf">/Pictures</span><span style="color:#d3d7cf">                                                          </span><span style="color:#d3d7cf">/lost+found</span></div>
<div class="t" style="left:2562px;top:545px"><span style="color:#d3d7cf">                                                 </span><span style="color:#d3d7cf">175G/465G (37%)</span><span style="color:#d3d7cf">                                                  </span><span style="color:#d3d7cf">2460G/2460G (99%)</span></div>
<div class="t" style="left:2562px;top:560px"><span style="color:#eeeeec">Hint: Want your plain shell? Press C-o, and get back to MC with C-o again.</span></div>
<div class="t" style="left:2562px;top:575px"><span style="color:#eeeeec">[root@vichy logout]#</span><span style="color:#d3d7cf">                                                                                                               </span><span style="color:#d3d7cf">[^]</span></div>
<div class="t" style="left:2562px;top:590px"><span style="color:#eeeeec"> 1</span><span style="color:#000000">Help       </span><span style="color:#eeeeec"> 2</span><span style="color:#000000">Menu       </span><span style="color:#eeeeec"> 3</span><span style="color:#000000">View       </span><span style="color:#eeeeec"> 4</span><span style="color:#000000">Edit        </span><span style="color:#eeeeec"> 5</span><span style="color:#000000">Copy        </span><span style="color:#eeeeec"> 6</span><span style="color:#000000">RenMov     </span><span style="color:#eeeeec"> 7</span><span style="color:#000000">Mkdir      </span><span style="color:#eeeeec"> 8</span><span style="color:#000000">Delete     </span><span style="color:#eeeeec"> 9</span><span style="color:#000000">PullDn      </span><span style="color:#eeeeec">10</span><span style="color:#000000">Quit        </span></div>
<div style="position:absolute;left:3296px;top:304px;width:9px;height:17px;background:transparent;box-sizing:border-box;border:1px solid #000;box-shadow:inset 0 0 0 0.5px #000"></div>
<div class="t" style="left:2562px;top:663px"><span style="color:#eeeeec">[root@vichy ~]# df -h</span></div>
<div class="t" style="left:2562px;top:678px"><span style="color:#eeeeec">Filesystem             Size  Used Avail Use% Mounted on</span></div>
<div class="t" style="left:2562px;top:693px"><span style="color:#eeeeec">devtmpfs               3.8G     0  3.8G   0% /dev</span></div>
<div class="t" style="left:2562px;top:708px"><span style="color:#eeeeec">tmpfs                  3.9G     0  3.9G   0% /dev/shm</span></div>
<div class="t" style="left:2562px;top:723px"><span style="color:#eeeeec">tmpfs                  3.9G  8.9M  3.9G   1% /run</span></div>
<div class="t" style="left:2562px;top:738px"><span style="color:#eeeeec">tmpfs                  3.9G     0  3.9G   0% /sys/fs/cgroup</span></div>
<div class="t" style="left:2562px;top:753px"><span style="color:#eeeeec">/dev/mapper/cl-root     50G  5.7G   45G  12% /</span></div>
<div class="t" style="left:2562px;top:768px"><span style="color:#eeeeec">/dev/mapper/cl-home    407G  128G  280G  32% /home</span></div>
<div class="t" style="left:2562px;top:783px"><span style="color:#eeeeec">/dev/sdf1              976M  154M  755M  17% /boot</span></div>
<div class="t" style="left:2562px;top:798px"><span style="color:#eeeeec">tmpfs                  781M     0  781M   0% /run/user/0</span></div>
<div class="t" style="left:2562px;top:813px"><span style="color:#eeeeec">/dev/mapper/vdo0       2.5T   20G  2.3T   1% /mnt/pole</span></div>
<div class="t" style="left:2562px;top:828px"><span style="color:#eeeeec">/dev/mapper/oldsecure  466G  291G  175G  63% /mnt/old</span></div>
<div class="t" style="left:2562px;top:843px"><span style="color:#eeeeec">[root@vichy ~]# vdos</span></div>
<div class="t" style="left:2562px;top:858px"><span style="color:#eeeeec">vdosetuuid  vdostats</span></div>
<div class="t" style="left:2562px;top:873px"><span style="color:#eeeeec">[root@vichy ~]# vdostats</span></div>
<div class="t" style="left:2562px;top:888px"><span style="color:#eeeeec">Device               1K-blocks      Used Available Use% Space saving%</span></div>
<div class="t" style="left:2562px;top:903px"><span style="color:#eeeeec">/dev/mapper/vdo0     1953244160  16968900 1936275260   0%           77%</span></div>
<div class="t" style="left:2562px;top:918px"><span style="color:#eeeeec">[root@vichy ~]# vdostats -h</span></div>
<div class="t" style="left:2562px;top:933px"><span style="color:#eeeeec">Usage: vdostats [options] [device ...]</span></div>
<div class="t" style="left:2562px;top:963px"><span style="color:#eeeeec">Options:</span></div>
<div class="t" style="left:2562px;top:978px"><span style="color:#eeeeec">  -h, --help        show this help message and exit</span></div>
<div class="t" style="left:2562px;top:993px"><span style="color:#eeeeec">  --all             Equivalent to --verbose</span></div>
<div class="t" style="left:2562px;top:1008px"><span style="color:#eeeeec">  --human-readable  Display stats in human-readable form</span></div>
<div class="t" style="left:2562px;top:1023px"><span style="color:#eeeeec">  --si              Use SI units, implies --human-readable</span></div>
<div class="t" style="left:2562px;top:1038px"><span style="color:#eeeeec">  --verbose         Include verbose statistics</span></div>
<div class="t" style="left:2562px;top:1053px"><span style="color:#eeeeec">  --version         Print the vdostats version number and exit</span></div>
<div class="t" style="left:2562px;top:1068px"><span style="color:#eeeeec">[root@vichy ~]# vdostats --human-readable</span></div>
<div class="t" style="left:2562px;top:1083px"><span style="color:#eeeeec">Device                    Size      Used Available Use% Space saving%</span></div>
<div class="t" style="left:2562px;top:1098px"><span style="color:#eeeeec">/dev/mapper/vdo0          1.8T     16.2G      1.8T   0%           77%</span></div>
<div class="t" style="left:2562px;top:1113px"><span style="color:#eeeeec">[root@vichy ~]# </span></div><div style="position:absolute;left:2673px;top:1112px;width:9px;height:17px;background:transparent;box-sizing:border-box;border:1px solid #eeeeec;box-shadow:inset 0 0 0 0.5px #eeeeec"></div>
<div style="position:absolute;left:1596px;top:0px;width:1924px;height:33px;background:#202020;"></div>
<div style="position:absolute;left:1596px;top:32px;width:1924px;height:1px;background:#0c0c0c;"></div>
<svg style="position:absolute;left:1601px;top:6px" width="18" height="20"><path d="M2 3 L8 9 L14 3 M2 16 L8 10 L14 16" stroke="#5cc8f0" stroke-width="3" fill="none"/><ellipse cx="8" cy="10" rx="5" ry="3" fill="#111" stroke="#ddd" stroke-width="1"/></svg>
<div class="ps" style="left:1620px;top:8px;font-size:15px;line-height:15px;color:#eeeeee;">Apps</div>
<div style="position:absolute;left:1656px;top:11px;width:2px;height:2px;background:#777;"></div>
<div style="position:absolute;left:1656px;top:15px;width:2px;height:2px;background:#777;"></div>
<div style="position:absolute;left:1656px;top:19px;width:2px;height:2px;background:#777;"></div>
<div style="position:absolute;left:2155px;top:0px;width:98px;height:31px;background:#1c3044;border-radius:2px"></div>
<div style="position:absolute;left:1666px;top:9px;width:12px;height:11px;border:1px solid #9a9a9a;background:#2a2a2a"></div><div style="position:absolute;left:1668px;top:12px;width:5px;height:5px;color:#bbb;font:7px/5px 'Liberation Mono'">&gt;</div><div style="position:absolute;left:1672px;top:17px;width:4px;height:1px;background:#bbb"></div>
<div class="ps" style="left:1690px;top:8px;font-size:14.5px;line-height:14.5px;color:#b8b8b8;">Terminal -</div>
<div style="position:absolute;left:1764px;top:9px;width:12px;height:11px;border:1px solid #9a9a9a;background:#2a2a2a"></div><div style="position:absolute;left:1766px;top:12px;width:5px;height:5px;color:#bbb;font:7px/5px 'Liberation Mono'">&gt;</div><div style="position:absolute;left:1770px;top:17px;width:4px;height:1px;background:#bbb"></div>
<div class="ps" style="left:1788px;top:8px;font-size:14.5px;line-height:14.5px;color:#b8b8b8;">Terminal -</div>
<div style="position:absolute;left:1862px;top:9px;width:12px;height:11px;border:1px solid #9a9a9a;background:#2a2a2a"></div><div style="position:absolute;left:1864px;top:12px;width:5px;height:5px;color:#bbb;font:7px/5px 'Liberation Mono'">&gt;</div><div style="position:absolute;left:1868px;top:17px;width:4px;height:1px;background:#bbb"></div>
<div class="ps" style="left:1886px;top:8px;font-size:14.5px;line-height:14.5px;color:#b8b8b8;">Terminal...</div>
<div style="position:absolute;left:1961px;top:9px;width:12px;height:11px;border:1px solid #9a9a9a;background:#2a2a2a"></div><div style="position:absolute;left:1963px;top:12px;width:5px;height:5px;color:#bbb;font:7px/5px 'Liberation Mono'">&gt;</div><div style="position:absolute;left:1967px;top:17px;width:4px;height:1px;background:#bbb"></div>
<div class="ps" style="left:1985px;top:8px;font-size:14.5px;line-height:14.5px;color:#b8b8b8;">Terminal -</div>
<div style="position:absolute;left:2060px;top:9px;width:12px;height:11px;border:1px solid #9a9a9a;background:#2a2a2a"></div><div style="position:absolute;left:2062px;top:12px;width:5px;height:5px;color:#bbb;font:7px/5px 'Liberation Mono'">&gt;</div><div style="position:absolute;left:2066px;top:17px;width:4px;height:1px;background:#bbb"></div>
<div class="ps" style="left:2084px;top:8px;font-size:14.5px;line-height:14.5px;color:#b8b8b8;">Terminal...</div>
<div style="position:absolute;left:2158px;top:9px;width:12px;height:11px;border:1px solid #9a9a9a;background:#2a2a2a"></div><div style="position:absolute;left:2160px;top:12px;width:5px;height:5px;color:#bbb;font:7px/5px 'Liberation Mono'">&gt;</div><div style="position:absolute;left:2164px;top:17px;width:4px;height:1px;background:#bbb"></div>
<div class="ps" style="left:2183px;top:8px;font-size:14.5px;line-height:14.5px;color:#ffffff;">Terminal...</div>
<div class="ps" style="left:2266px;top:8px;font-size:14.5px;line-height:14.5px;color:#e6e6e6;">31.61 KiB</div>
<div style="position:absolute;left:2331px;top:3px;width:6px;height:25px;background:#3c3c3c;"></div>
<div style="position:absolute;left:2331px;top:10px;width:6px;height:18px;background:#f05a14;"></div>
<div style="position:absolute;left:2339px;top:3px;width:6px;height:25px;background:#3c3c3c;"></div>
<div style="position:absolute;left:2339px;top:10px;width:6px;height:18px;background:#6ed21e;"></div>
<div class="ps" style="left:2348px;top:8px;font-size:14.5px;line-height:14.5px;color:#e6e6e6;">11.87 KiB</div>
<div class="ps" style="left:2422px;top:2px;font-size:12.5px;line-height:14px;color:#dddddd;">C00: 48 °C</div>
<div class="ps" style="left:2422px;top:19px;font-size:12.5px;line-height:14px;color:#dddddd;">C16: 46 °C</div>
<div class="ps" style="left:2492px;top:2px;font-size:12.5px;line-height:14px;color:#dddddd;">C04: 48 °C</div>
<div class="ps" style="left:2492px;top:19px;font-size:12.5px;line-height:14px;color:#dddddd;">C20: 47 °C</div>
<div class="ps" style="left:2562px;top:2px;font-size:12.5px;line-height:14px;color:#dddddd;">C08: 46 °C</div>
<div class="ps" style="left:2562px;top:19px;font-size:12.5px;line-height:14px;color:#dddddd;">C24: 46 °C</div>
<div class="ps" style="left:2632px;top:2px;font-size:12.5px;line-height:14px;color:#dddddd;">C12: 46 °C</div>
<div class="ps" style="left:2632px;top:19px;font-size:12.5px;line-height:14px;color:#dddddd;">C28: 46 °C</div>
<div class="ps" style="left:2698px;top:2px;font-size:12.5px;line-height:14px;color:#dddddd;">GPU: 46 °C</div>
<div class="ps" style="left:2698px;top:19px;font-size:12.5px;line-height:14px;color:#dddddd;">Chip 0 : 42.000 W</div>
<div class="ps" style="left:2812px;top:8px;font-size:14.5px;line-height:14.5px;color:#e6e6e6;">cpu</div>
<div style="position:absolute;left:2838px;top:3px;width:6px;height:26px;background:#3a3a3a;"></div>
<div style="position:absolute;left:2838px;top:27px;width:6px;height:2px;background:#2c5c9c;"></div>
<div class="ps" style="left:2847px;top:8px;font-size:14.5px;line-height:14.5px;color:#e6e6e6;">mem</div>
<div style="position:absolute;left:2884px;top:3px;width:6px;height:26px;background:#3a3a3a;"></div>
<div style="position:absolute;left:2884px;top:27px;width:6px;height:2px;background:#2c5c9c;"></div>
<div class="ps" style="left:2894px;top:8px;font-size:14.5px;line-height:14.5px;color:#e6e6e6;">1:03</div>
<div class="ps" style="left:2928px;top:8px;font-size:14.5px;line-height:14.5px;color:#e6e6e6;">sda</div>
<div style="position:absolute;left:2955px;top:3px;width:6px;height:26px;background:#3a3a3a;"></div>
<div style="position:absolute;left:2963px;top:3px;width:6px;height:26px;background:#3a3a3a;"></div>
<div class="ps" style="left:2976px;top:8px;font-size:14.5px;line-height:14.5px;color:#e6e6e6;">2.35 GHz</div>
<div style="position:absolute;left:3043px;top:0px;width:94px;height:32px;background:#181818;"></div>
<div style="position:absolute;left:3043px;top:15px;width:94px;height:1px;background:#2a2a2a;"></div>
<div style="position:absolute;left:3089px;top:0px;width:1px;height:32px;background:#2a2a2a;"></div>
<div style="position:absolute;left:3090px;top:0px;width:46px;height:15px;background:#222;"></div>
<div style="position:absolute;left:3090px;top:0px;width:20px;height:7px;background:#1e4f8a;box-shadow: inset 0 0 0 1px #cfd8e8"></div>
<div style="position:absolute;left:3111px;top:0px;width:12px;height:14px;background:#6a8fbf;box-shadow: inset 0 0 0 1px #cfd8e8"></div>
<div style="position:absolute;left:3124px;top:0px;width:12px;height:7px;background:#1e4f8a;box-shadow: inset 0 0 0 1px #cfd8e8"></div>
<div style="position:absolute;left:3124px;top:8px;width:12px;height:6px;background:#1e4f8a;box-shadow: inset 0 0 0 1px #cfd8e8"></div>
<div style="position:absolute;left:3090px;top:8px;width:20px;height:6px;background:#1e4f8a;box-shadow: inset 0 0 0 1px #cfd8e8"></div>
<div style="position:absolute;left:3089px;top:0px;width:48px;height:16px;background:transparent;box-sizing:border-box;border:1px solid #cfd8e8;border-top:none"></div>
<svg style="position:absolute;left:3139px;top:3px" width="37" height="26"><rect x="0" y="0" width="37" height="2" fill="#d22"/><rect x="0" y="2" width="37" height="2" fill="#fff"/><rect x="0" y="4" width="37" height="2" fill="#d22"/><rect x="0" y="6" width="37" height="2" fill="#fff"/><rect x="0" y="8" width="37" height="2" fill="#d22"/><rect x="0" y="10" width="37" height="2" fill="#fff"/><rect x="0" y="12" width="37" height="2" fill="#d22"/><rect x="0" y="14" width="37" height="2" fill="#fff"/><rect x="0" y="16" width="37" height="2" fill="#d22"/><rect x="0" y="18" width="37" height="2" fill="#fff"/><rect x="0" y="20" width="37" height="2" fill="#d22"/><rect x="0" y="22" width="37" height="2" fill="#fff"/><rect x="0" y="24" width="37" height="2" fill="#d22"/><rect x="0" y="0" width="16" height="14" fill="#4a5a96"/></svg>
<svg style="position:absolute;left:3179px;top:8px" width="20" height="18"><circle cx="8" cy="8" r="6" fill="#e8e0a0"/><ellipse cx="11" cy="12" rx="8" ry="5" fill="#d8d8d8"/></svg>
<div class="ps" style="left:3208px;top:1px;font-size:9.5px;line-height:11px;color:#dddddd;">T: -4 °C</div>
<div class="ps" style="left:3199px;top:11px;font-size:9.5px;line-height:11px;color:#dddddd;">WS: 9 km/h</div>
<div class="ps" style="left:3202px;top:21px;font-size:9.5px;line-height:11px;color:#dddddd;">R: 0.0 mm</div>
<svg style="position:absolute;left:3256px;top:4px" width="24" height="24"><circle cx="12" cy="12" r="11" fill="#2d95e0"/><circle cx="12" cy="12" r="8" fill="none" stroke="#fff" stroke-width="1.5"/><path d="M6 10 L12 13 L17 8 M12 13 L14 19" stroke="#fff" stroke-width="1.5" fill="none"/></svg>
<svg style="position:absolute;left:3291px;top:5px" width="19" height="23"><ellipse cx="9.5" cy="11.5" rx="9" ry="11" fill="#3674d0"/><path d="M6 7 L13 14 L9.5 17.5 L9.5 5.5 L13 9 L6 16" stroke="#fff" stroke-width="1.6" fill="none"/></svg>
<svg style="position:absolute;left:3321px;top:7px" width="23" height="19"><rect x="1" y="5" width="14" height="10" fill="#4a78b8" stroke="#ccc"/><rect x="7" y="1" width="14" height="10" fill="#5a88c8" stroke="#ccc"/><rect x="3" y="16" width="12" height="2" fill="#aaa"/></svg>
<svg style="position:absolute;left:3357px;top:9px" width="15" height="16"><path d="M7.5 1 C3 1 3 5 3 9 L1 12 L14 12 L12 9 C12 5 12 1 7.5 1 Z" fill="#f0f0f0"/><circle cx="7.5" cy="14" r="1.8" fill="#f0f0f0"/></svg>
<div style="position:absolute;left:3383px;top:11px;width:2px;height:2px;background:#777;"></div>
<div style="position:absolute;left:3470px;top:11px;width:2px;height:2px;background:#777;"></div>
<div style="position:absolute;left:3383px;top:15px;width:2px;height:2px;background:#777;"></div>
<div style="position:absolute;left:3470px;top:15px;width:2px;height:2px;background:#777;"></div>
<div style="position:absolute;left:3383px;top:19px;width:2px;height:2px;background:#777;"></div>
<div style="position:absolute;left:3470px;top:19px;width:2px;height:2px;background:#777;"></div>
<div style="position:absolute;left:3395px;top:3px;width:10px;height:3px;background:#f2f2f2;"></div><div style="position:absolute;left:3405px;top:6px;width:3px;height:9px;background:#f2f2f2;"></div><div style="position:absolute;left:3395px;top:15px;width:10px;height:3px;background:#f2f2f2;"></div><div style="position:absolute;left:3392px;top:17px;width:3px;height:9px;background:#f2f2f2;"></div><div style="position:absolute;left:3395px;top:27px;width:10px;height:3px;background:#f2f2f2;"></div>
<div style="position:absolute;left:3423px;top:6px;width:3px;height:9px;background:#f2f2f2;"></div><div style="position:absolute;left:3423px;top:17px;width:3px;height:9px;background:#f2f2f2;"></div>
<div style="position:absolute;left:3427px;top:10px;width:3px;height:3px;background:#f2f2f2;"></div>
<div style="position:absolute;left:3427px;top:19px;width:3px;height:3px;background:#f2f2f2;"></div>
<div style="position:absolute;left:3431px;top:6px;width:3px;height:9px;background:#f2f2f2;"></div><div style="position:absolute;left:3434px;top:15px;width:10px;height:3px;background:#f2f2f2;"></div><div style="position:absolute;left:3444px;top:6px;width:3px;height:9px;background:#f2f2f2;"></div><div style="position:absolute;left:3444px;top:17px;width:3px;height:9px;background:#f2f2f2;"></div>
<div style="position:absolute;left:3451px;top:3px;width:9px;height:3px;background:#f2f2f2;"></div><div style="position:absolute;left:3460px;top:6px;width:3px;height:9px;background:#f2f2f2;"></div><div style="position:absolute;left:3451px;top:15px;width:9px;height:3px;background:#f2f2f2;"></div><div style="position:absolute;left:3448px;top:17px;width:3px;height:9px;background:#f2f2f2;"></div><div style="position:absolute;left:3451px;top:27px;width:9px;height:3px;background:#f2f2f2;"></div>
<div class="ps" style="left:3476px;top:8px;font-size:15px;line-height:15px;color:#e6e6e6;">Martin</div>
</div></body></html>
